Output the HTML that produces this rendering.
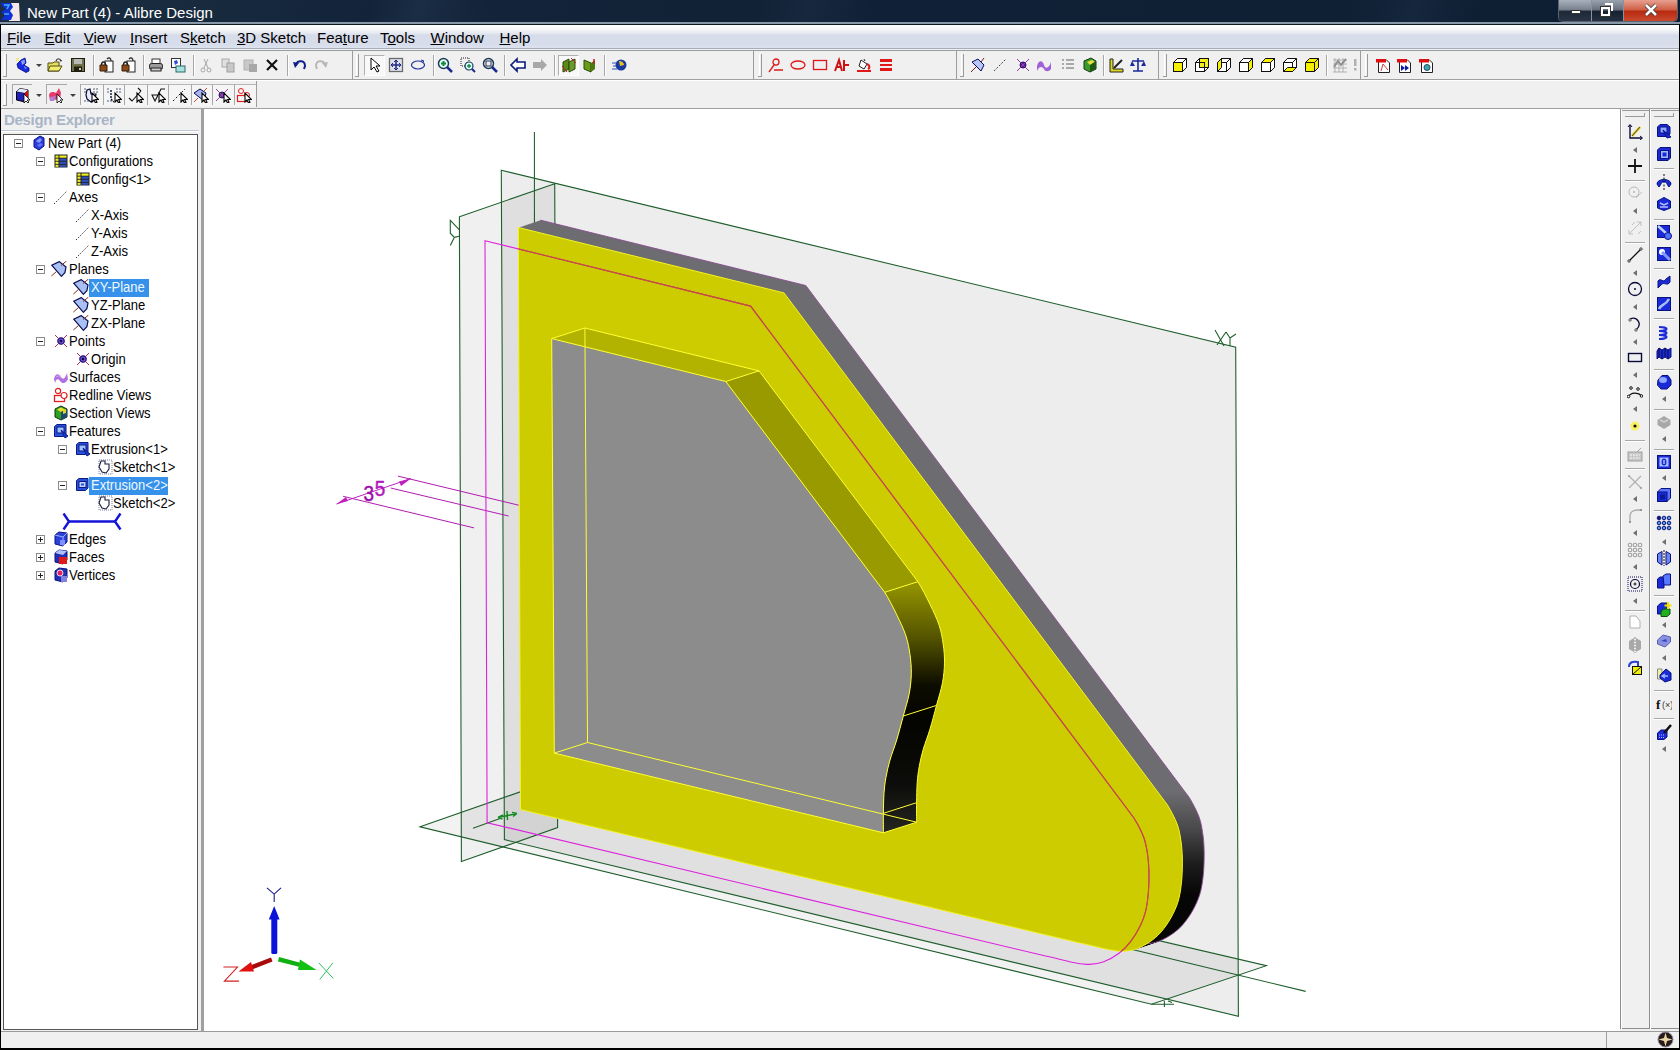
<!DOCTYPE html>
<html><head><meta charset="utf-8">
<style>
*{margin:0;padding:0;box-sizing:border-box}
html,body{width:1680px;height:1050px;overflow:hidden;background:#f0f0f0;font-family:"Liberation Sans",sans-serif;position:relative}
.abs{position:absolute}
#title{left:0;top:0;width:1680px;height:25px;background:linear-gradient(transparent 88%,#8898a8 88%,#8898a8 95%,#0e1824 95%),linear-gradient(105deg,#1c2e40 0%,#172a3e 12%,#13243a 22%,#1a2d44 25%,#132339 29%,#112136 45%,#17283e 48%,#102036 52%,#0f1f34 80%,#15273d 84%,#0e1e33 88%,#0e1d32 100%)}
#title .t{left:27px;top:4px;color:#fff;font-size:15px;white-space:nowrap}
#menu{left:1px;top:25px;width:1678px;height:26px;background:linear-gradient(#ffffff 0px,#fdfdfe 2px,#f3f5f8 5px,#e6e9f1 8px,#d7dcea 10px,#d8ddeb 20px,#dde2ef 23px,#a9adb8 23px,#a9adb8 24px,#eef0f4 24px,#eef0f4 25px,#9c9c9c 25px)}
#menu span{position:absolute;top:4px;font-size:15px;color:#000;white-space:nowrap}
#tb{left:1px;top:51px;width:1678px;height:58px;background:#f0f0f0}
#panel{left:1px;top:109px;width:200px;height:922px;background:#f0f0f0}
#split{left:201px;top:109px;width:3px;height:922px;background:#a0a0a0}
#view{left:204px;top:109px;width:1416px;height:922px;background:#fff}
#rtb{left:1620px;top:109px;width:59px;height:920px;background:#f0f0f0;border-left:1px solid #8e8e8e;border-bottom:1px solid #8e8e8e}
#status{left:1px;top:1031px;width:1678px;height:17px;background:#f0f0f0;border-top:1px solid #9a9a9a}
#tree{left:3px;top:134px;width:195px;height:896px;background:#fff;border:1px solid #555}
.row{position:absolute;height:18px;font-size:14.4px;line-height:18px;white-space:nowrap;color:#000;transform:scaleX(0.905);transform-origin:0 0}
.ex{position:absolute;width:9px;height:9px;border:1px solid #8b8b8b;background:#fff}
.ex:before{content:"";position:absolute;left:1px;top:3px;width:5px;height:1px;background:#222}
.ex.p:after{content:"";position:absolute;left:3px;top:1px;width:1px;height:5px;background:#222}
.ic{position:absolute;width:16px;height:16px}
.sel{background:#3591ea;color:#f4faff;padding:0 2px;margin-left:-2px}
</style></head><body>
<div id="title" class="abs"><div class="t abs">New Part (4) - Alibre Design</div></div>
<div id="menu" class="abs">
<span style="left:6px"><u>F</u>ile</span>
<span style="left:43.5px"><u>E</u>dit</span>
<span style="left:82.8px"><u>V</u>iew</span>
<span style="left:129px"><u>I</u>nsert</span>
<span style="left:179px">S<u>k</u>etch</span>
<span style="left:236px"><u>3</u>D Sketch</span>
<span style="left:316px">Fea<u>t</u>ure</span>
<span style="left:379px">T<u>o</u>ols</span>
<span style="left:429.5px"><u>W</u>indow</span>
<span style="left:498.5px"><u>H</u>elp</span>
</div>
<div id="tb" class="abs"></div>
<div id="panel" class="abs"></div>
<div id="split" class="abs"></div>
<div id="view" class="abs"></div>
<div id="rtb" class="abs"></div>
<div id="status" class="abs"></div>
<div id="tree" class="abs"></div>
<div class="abs" style="left:4px;top:111px;font-size:15px;font-weight:bold;color:#a9b5c6;white-space:nowrap;letter-spacing:-0.3px">Design Explorer</div>
<div class="abs" style="left:1px;top:130px;width:198px;height:1px;background:#c0c8d8"></div>
<div class="abs" style="left:1px;top:131px;width:198px;height:1px;background:#fff"></div>
<div class="ex" style="left:14px;top:139px"></div>
<svg class="abs" style="left:31.0px;top:135.0px" width="16" height="16" viewBox="0 0 16 16"><path d="M3,5 L9,1 L13,3 L13,11 L8,15 L3,12 Z" fill="#2a3ee0" stroke="#0a1280"/><path d="M5,6 L9,3 L11,5 L8,8 Z" fill="#8898ff"/><path d="M6,10 L10,8 L12,10 L8,12 Z" fill="#6070f0"/></svg>
<div class="row" style="left:47.6px;top:134px">New Part (4)</div>
<div class="ex" style="left:36px;top:157px"></div>
<svg class="abs" style="left:53.0px;top:153.0px" width="16" height="16" viewBox="0 0 16 16"><rect x="1.5" y="1.5" width="13" height="13" fill="#222"/><rect x="2.5" y="2.5" width="3" height="2.2" fill="#f0f020"/><rect x="6.5" y="2.5" width="7" height="2.2" fill="#f0f020"/><rect x="2.5" y="5.6" width="3" height="2.2" fill="#f0f020"/><rect x="6.5" y="5.6" width="7" height="2.2" fill="#3050c0"/><rect x="2.5" y="8.7" width="3" height="2.2" fill="#f0f020"/><rect x="6.5" y="8.7" width="7" height="2.2" fill="#3050c0"/><rect x="2.5" y="11.8" width="3" height="2" fill="#f0f020"/><rect x="6.5" y="11.8" width="7" height="2" fill="#3050c0"/></svg>
<div class="row" style="left:69.3px;top:152px">Configurations</div>
<svg class="abs" style="left:75.0px;top:171.0px" width="16" height="16" viewBox="0 0 16 16"><rect x="1.5" y="1.5" width="13" height="13" fill="#222"/><rect x="2.5" y="2.5" width="3" height="2.2" fill="#f0f020"/><rect x="6.5" y="2.5" width="7" height="2.2" fill="#f0f020"/><rect x="2.5" y="5.6" width="3" height="2.2" fill="#f0f020"/><rect x="6.5" y="5.6" width="7" height="2.2" fill="#3050c0"/><rect x="2.5" y="8.7" width="3" height="2.2" fill="#f0f020"/><rect x="6.5" y="8.7" width="7" height="2.2" fill="#3050c0"/><rect x="2.5" y="11.8" width="3" height="2" fill="#f0f020"/><rect x="6.5" y="11.8" width="7" height="2" fill="#3050c0"/></svg>
<div class="row" style="left:91.4px;top:170px">Config&lt;1&gt;</div>
<div class="ex" style="left:36px;top:193px"></div>
<svg class="abs" style="left:53.0px;top:189.0px" width="16" height="16" viewBox="0 0 16 16"><path d="M1,15 L14,2" stroke="#333" stroke-dasharray="1.5 1.5"/></svg>
<div class="row" style="left:69.3px;top:188px">Axes</div>
<svg class="abs" style="left:75.0px;top:207.0px" width="16" height="16" viewBox="0 0 16 16"><path d="M1,15 L14,2" stroke="#333" stroke-dasharray="1.5 1.5"/></svg>
<div class="row" style="left:91.4px;top:206px">X-Axis</div>
<svg class="abs" style="left:75.0px;top:225.0px" width="16" height="16" viewBox="0 0 16 16"><path d="M1,15 L14,2" stroke="#333" stroke-dasharray="1.5 1.5"/></svg>
<div class="row" style="left:91.4px;top:224px">Y-Axis</div>
<svg class="abs" style="left:75.0px;top:243.0px" width="16" height="16" viewBox="0 0 16 16"><path d="M1,15 L14,2" stroke="#333" stroke-dasharray="1.5 1.5"/></svg>
<div class="row" style="left:91.4px;top:242px">Z-Axis</div>
<div class="ex" style="left:36px;top:265px"></div>
<svg class="abs" style="left:51.0px;top:261.0px" width="16" height="16" viewBox="0 0 16 16"><path d="M0.7,4.2 L8.2,0.6 L15,6 L13.9,11.7 L10.4,15.3 Z" fill="#a8c0f4" stroke="#0c0c50" stroke-width="1.2"/><path d="M0.4,15 L5.4,10.6 M10,4.6 L15.5,0" stroke="#8a3020" stroke-width="1"/></svg>
<div class="row" style="left:69.3px;top:260px">Planes</div>
<svg class="abs" style="left:73.0px;top:279.0px" width="16" height="16" viewBox="0 0 16 16"><path d="M0.7,4.2 L8.2,0.6 L15,6 L13.9,11.7 L10.4,15.3 Z" fill="#a8c0f4" stroke="#0c0c50" stroke-width="1.2"/><path d="M0.4,15 L5.4,10.6 M10,4.6 L15.5,0" stroke="#8a3020" stroke-width="1"/></svg>
<div class="abs" style="left:89px;top:279px;width:60px;height:18px;background:#3591ea"></div>
<div class="row" style="left:91.4px;top:278px;color:#f0f8ff">XY-Plane</div>
<svg class="abs" style="left:73.0px;top:297.0px" width="16" height="16" viewBox="0 0 16 16"><path d="M0.7,4.2 L8.2,0.6 L15,6 L13.9,11.7 L10.4,15.3 Z" fill="#a8c0f4" stroke="#0c0c50" stroke-width="1.2"/><path d="M0.4,15 L5.4,10.6 M10,4.6 L15.5,0" stroke="#8a3020" stroke-width="1"/></svg>
<div class="row" style="left:91.4px;top:296px">YZ-Plane</div>
<svg class="abs" style="left:73.0px;top:315.0px" width="16" height="16" viewBox="0 0 16 16"><path d="M0.7,4.2 L8.2,0.6 L15,6 L13.9,11.7 L10.4,15.3 Z" fill="#a8c0f4" stroke="#0c0c50" stroke-width="1.2"/><path d="M0.4,15 L5.4,10.6 M10,4.6 L15.5,0" stroke="#8a3020" stroke-width="1"/></svg>
<div class="row" style="left:91.4px;top:314px">ZX-Plane</div>
<div class="ex" style="left:36px;top:337px"></div>
<svg class="abs" style="left:53.0px;top:333.0px" width="16" height="16" viewBox="0 0 16 16"><circle cx="8" cy="8" r="3.2" fill="#7050d8" stroke="#20107a" stroke-width="1.2"/><circle cx="8" cy="8" r="1.3" fill="#100840"/><path d="M2,2 L5.5,5.5 M10.5,10.5 L14,14 M14,2 L10.5,5.5 M5.5,10.5 L2,14" stroke="#b03060"/></svg>
<div class="row" style="left:69.3px;top:332px">Points</div>
<svg class="abs" style="left:75.0px;top:351.0px" width="16" height="16" viewBox="0 0 16 16"><circle cx="8" cy="8" r="3.2" fill="#7050d8" stroke="#20107a" stroke-width="1.2"/><circle cx="8" cy="8" r="1.3" fill="#100840"/><path d="M2,2 L5.5,5.5 M10.5,10.5 L14,14 M14,2 L10.5,5.5 M5.5,10.5 L2,14" stroke="#b03060"/></svg>
<div class="row" style="left:91.4px;top:350px">Origin</div>
<svg class="abs" style="left:53.0px;top:369.0px" width="16" height="16" viewBox="0 0 16 16"><path d="M1,10 C2,4 6,4 8,8 C10,11 12,10 14,4 L15,10 C13,15 9,15 7,12 C5,9 3,10 2,14 Z" fill="#b070e0"/><path d="M3,8 C5,6 7,7 8,9" stroke="#d8b0f0" fill="none"/></svg>
<div class="row" style="left:69.3px;top:368px">Surfaces</div>
<svg class="abs" style="left:53.0px;top:387.0px" width="16" height="16" viewBox="0 0 16 16"><circle cx="5" cy="4" r="2.6" fill="none" stroke="#e02020" stroke-width="1.2"/><rect x="1.5" y="8.5" width="10" height="6" fill="none" stroke="#e02020" stroke-width="1.3"/><circle cx="11" cy="8.5" r="3" fill="#fff" stroke="#e02020" stroke-width="1.2"/></svg>
<div class="row" style="left:69.3px;top:386px">Redline Views</div>
<svg class="abs" style="left:53.0px;top:405.0px" width="16" height="16" viewBox="0 0 16 16"><path d="M2,4 L8,1 L14,4 L14,12 L8,15 L2,12 Z" fill="#30a020" stroke="#103010"/><path d="M4,4.5 L8,2.5 L12,4.5 L8,7 Z" fill="#e8e030"/><path d="M8,7 L14,4 L14,12 L8,15 Z" fill="#1a4a70"/><path d="M10,5 L13,4 L13,8 L10,9 Z" fill="#e0d030"/></svg>
<div class="row" style="left:69.3px;top:404px">Section Views</div>
<div class="ex" style="left:36px;top:427px"></div>
<svg class="abs" style="left:53.0px;top:423.0px" width="16" height="16" viewBox="0 0 16 16"><path d="M1.5,3.5 L4,1.5 L13,1.5 L13,11 L10.5,13.5 L1.5,13.5 Z" fill="#2a50e0" stroke="#0a1a80"/><rect x="4" y="4" width="7" height="6" fill="#a0c0ff" stroke="#0a1a80"/><path d="M8,7 L15,13 L12,15 Z" fill="#1a3ad0" stroke="#0a1a80"/></svg>
<div class="row" style="left:69.3px;top:422px">Features</div>
<div class="ex" style="left:58px;top:445px"></div>
<svg class="abs" style="left:75.0px;top:441.0px" width="16" height="16" viewBox="0 0 16 16"><path d="M1.5,3.5 L4,1.5 L13,1.5 L13,11 L10.5,13.5 L1.5,13.5 Z" fill="#2a50e0" stroke="#0a1a80"/><rect x="4" y="4" width="7" height="6" fill="#a0c0ff" stroke="#0a1a80"/><path d="M8,7 L15,13 L12,15 Z" fill="#1a3ad0" stroke="#0a1a80"/></svg>
<div class="row" style="left:91.4px;top:440px">Extrusion&lt;1&gt;</div>
<svg class="abs" style="left:97.0px;top:459.0px" width="16" height="16" viewBox="0 0 16 16"><rect x="2" y="1" width="13" height="14" fill="none" stroke="#7080a0" stroke-dasharray="1 1"/><path d="M4,2 L8,2 L8,5 L12,5 L12,10 L9,14 L5,13 L2,8 Z" fill="#fff" stroke="#1a1a40" stroke-width="1.1"/></svg>
<div class="row" style="left:113.0px;top:458px">Sketch&lt;1&gt;</div>
<div class="ex" style="left:58px;top:481px"></div>
<svg class="abs" style="left:75.0px;top:477.0px" width="16" height="16" viewBox="0 0 16 16"><path d="M1.5,3.5 L4,1.5 L13,1.5 L13,11 L10.5,13.5 L1.5,13.5 Z" fill="#2a50e0" stroke="#0a1a80"/><rect x="4" y="4.5" width="7" height="6" fill="#c0d4ff" stroke="#0a1a80"/><rect x="6" y="6.5" width="3" height="2" fill="#2a50e0"/></svg>
<div class="abs" style="left:89px;top:477px;width:79px;height:18px;background:#3591ea"></div>
<div class="row" style="left:91.4px;top:476px;color:#f0f8ff">Extrusion&lt;2&gt;</div>
<svg class="abs" style="left:97.0px;top:495.0px" width="16" height="16" viewBox="0 0 16 16"><rect x="2" y="1" width="13" height="14" fill="none" stroke="#7080a0" stroke-dasharray="1 1"/><path d="M4,2 L8,2 L8,5 L12,5 L12,10 L9,14 L5,13 L2,8 Z" fill="#fff" stroke="#1a1a40" stroke-width="1.1"/></svg>
<div class="row" style="left:113.0px;top:494px">Sketch&lt;2&gt;</div>
<svg class="abs" style="left:62.0px;top:512.0px" width="61" height="19" viewBox="0 0 61 19"><path d="M6,9.5 L54,9.5" stroke="#1414d8" stroke-width="2.6"/><path d="M1.5,1.5 L7,9.5 L1.5,17.5 M58.5,1.5 L53,9.5 L58.5,17.5" fill="none" stroke="#1414d8" stroke-width="2.4"/></svg>
<div class="ex p" style="left:36px;top:535px"></div>
<svg class="abs" style="left:53.0px;top:531.0px" width="16" height="16" viewBox="0 0 16 16"><path d="M2,4 L6,1 L14,2 L14,11 L10,15 L2,13 Z" fill="#2a40d8" stroke="#0a1480"/><path d="M2,4 L10,6 L14,2 M10,6 L10,15" stroke="#a0b0ff" fill="none"/><rect x="7" y="9" width="5" height="5" fill="#8090ff"/></svg>
<div class="row" style="left:69.3px;top:530px">Edges</div>
<div class="ex p" style="left:36px;top:553px"></div>
<svg class="abs" style="left:53.0px;top:549.0px" width="16" height="16" viewBox="0 0 16 16"><path d="M2,4 L6,1 L14,2 L14,11 L10,15 L2,13 Z" fill="#2030b0" stroke="#0a1480"/><path d="M2,4 L6,1 L14,2 L10,6 Z" fill="#b0c0ff"/><rect x="6" y="8" width="8" height="7" fill="#e01818"/></svg>
<div class="row" style="left:69.3px;top:548px">Faces</div>
<div class="ex p" style="left:36px;top:571px"></div>
<svg class="abs" style="left:53.0px;top:567.0px" width="16" height="16" viewBox="0 0 16 16"><path d="M2,4 L6,1 L14,2 L14,11 L10,15 L2,13 Z" fill="#2030b0" stroke="#0a1480"/><circle cx="7" cy="6" r="3" fill="#e02060" stroke="#fff" stroke-width="0.8"/><rect x="8" y="9" width="6" height="6" fill="#8080e0"/></svg>
<div class="row" style="left:69.3px;top:566px">Vertices</div>
<svg class="abs" style="left:0;top:0" width="1680" height="1050" viewBox="0 0 1680 1050">
<defs>
<linearGradient id="gRound" gradientUnits="userSpaceOnUse" x1="0" y1="792" x2="0" y2="895">
<stop offset="0" stop-color="#6d6c70"/><stop offset="0.35" stop-color="#4a4a4c"/><stop offset="0.7" stop-color="#1c1c1c"/><stop offset="1" stop-color="#060606"/></linearGradient>
<linearGradient id="gWall" gradientUnits="userSpaceOnUse" x1="0" y1="588" x2="0" y2="832">
<stop offset="0" stop-color="#8f8f00"/><stop offset="0.2" stop-color="#555500"/><stop offset="0.4" stop-color="#0c0c00"/><stop offset="0.55" stop-color="#040400"/><stop offset="0.8" stop-color="#0c0c0a"/><stop offset="1" stop-color="#262620"/></linearGradient>
<clipPath id="cpView"><rect x="204" y="109" width="1416" height="920"/></clipPath>
<clipPath id="cpFace"><path d="M518.4,227.5 L784.0,292.9 L1167.5,805.0 C1170.9,810.6 1174.9,818.2 1177.1,824.0 C1179.3,829.8 1179.9,834.5 1180.8,840.0 C1181.7,845.5 1182.1,850.5 1182.3,857.0 C1182.5,863.5 1182.3,872.1 1181.8,879.0 C1181.2,885.9 1180.4,892.4 1179.0,898.1 C1177.6,903.8 1175.8,908.2 1173.3,913.3 C1170.8,918.4 1167.3,924.1 1163.8,928.6 C1160.3,933.1 1156.9,936.7 1152.4,940.0 C1148.0,943.3 1142.0,946.7 1137.1,948.6 C1132.2,950.5 1127.7,951.0 1122.9,951.2 C1118.2,951.4 1114.1,950.6 1108.6,949.6 C1103.1,948.6 1095.1,946.5 1090.0,945.3 C1084.9,944.1 1080.0,943.0 1078.0,942.6 L520.5,809.5 Z"/></clipPath>
</defs>
<g clip-path="url(#cpView)">
<g fill="#000" fill-opacity="0.075" stroke="none">
<polygon points="501.3,170.3 1235.7,347.2 1238.4,1016.4 504.4,839.6" fill-opacity="0.07"/>
<polygon points="459.4,216.8 554.7,183.7 557.6,827.6 461.4,861.5" fill-opacity="0.058"/>
<polygon points="420.1,826.8 520.1,791.9 1266.4,965.7 1151.5,1004.3" fill-opacity="0.05"/>
</g>
<g fill="none" stroke="#1f5e2c" stroke-width="1.1">
<polygon points="501.3,170.3 1235.7,347.2 1238.4,1016.4 504.4,839.6"/>
<polygon points="459.4,216.8 554.7,183.7 557.6,827.6 461.4,861.5"/>
<polygon points="420.1,826.8 520.1,791.9 1266.4,965.7 1151.5,1004.3"/>
<line x1="534.4" y1="131.9" x2="534.6" y2="805"/>
<line x1="534.4" y1="805" x2="1305.7" y2="991.4"/>
<line x1="500" y1="818.6" x2="473" y2="828.2"/>
<path d="M1215,330 L1224,346 M1217,345 L1226,332 M1226,332 L1230,338 L1236,334 M1230,338 L1230,346"/>
<path d="M459.2,229.6 L450.3,220.3 L450.3,233.2 L454.3,237.4 L459.2,236.3 M454.3,237.4 L450.3,245.6"/>
<path d="M1151.3,1004.3 L1174,1004.3 M1164.4,1001 L1164.4,1007 M1168,1001 L1172,1002.5"/>
</g>
<g fill="none" stroke="#b01cb0" stroke-width="1">
<line x1="397.9" y1="476.1" x2="518.7" y2="505.2"/>
<line x1="390.7" y1="488" x2="508.6" y2="516"/>
<line x1="343.1" y1="496.3" x2="474" y2="527.9"/>
<line x1="336.5" y1="504" x2="411" y2="478.5" stroke="#c020c0"/>
</g>
<path d="M336.5,504 L346,497 L348,501 Z M411,478.5 L401,486 L399,481.5 Z" fill="#c020c0"/>
<text x="0" y="0" font-family="Liberation Sans" font-size="22.5" fill="#9a10a8" stroke="#9a10a8" stroke-width="0.5" transform="translate(363.4 500.6) scale(0.84 1)">3</text><text x="0" y="0" font-family="Liberation Sans" font-size="22.5" fill="#b018c0" stroke="#b018c0" stroke-width="0.5" transform="translate(374.8 496.4) scale(0.84 1)">5</text>
<g id="body">
<g fill="url(#gRound)">
<path d="M540.2,220.1 L805.8,285.5 L1189.3,797.6 C1192.7,803.2 1196.7,810.8 1198.9,816.6 C1201.1,822.4 1201.7,827.1 1202.6,832.6 C1203.5,838.1 1203.9,843.1 1204.1,849.6 C1204.3,856.1 1204.1,864.8 1203.6,871.6 C1203.0,878.5 1202.2,885.0 1200.8,890.7 C1199.4,896.4 1197.6,900.8 1195.1,905.9 C1192.6,911.0 1189.1,916.8 1185.6,921.2 C1182.1,925.7 1178.7,929.3 1174.2,932.6 C1169.8,935.9 1163.8,939.3 1158.9,941.2 C1154.0,943.1 1149.5,943.6 1144.7,943.8 C1140.0,944.0 1135.9,943.2 1130.4,942.2 C1124.9,941.2 1116.9,939.1 1111.8,937.9 C1106.7,936.7 1101.8,935.6 1099.8,935.2 L542.3,802.1 Z"/>
<path d="M539.2,220.4 L804.8,285.8 L1188.3,797.9 C1191.7,803.6 1195.7,811.1 1197.9,816.9 C1200.1,822.8 1200.7,827.4 1201.6,832.9 C1202.5,838.4 1202.9,843.4 1203.1,849.9 C1203.3,856.4 1203.2,865.1 1202.6,871.9 C1202.1,878.8 1201.2,885.3 1199.8,891.0 C1198.4,896.8 1196.6,901.2 1194.1,906.2 C1191.6,911.3 1188.1,917.1 1184.6,921.5 C1181.1,926.0 1177.7,929.6 1173.2,932.9 C1168.8,936.3 1162.8,939.7 1157.9,941.5 C1153.0,943.4 1148.5,944.0 1143.7,944.1 C1139.0,944.3 1134.9,943.5 1129.4,942.5 C1123.9,941.6 1115.9,939.4 1110.8,938.2 C1105.7,937.1 1100.8,936.0 1098.8,935.5 L541.3,802.4 Z"/>
<path d="M538.2,220.8 L803.8,286.2 L1187.3,798.3 C1190.8,803.9 1194.7,811.4 1196.9,817.3 C1199.1,823.1 1199.8,827.8 1200.6,833.3 C1201.5,838.8 1202.0,843.8 1202.1,850.3 C1202.3,856.8 1202.2,865.4 1201.6,872.3 C1201.1,879.1 1200.2,885.7 1198.8,891.4 C1197.4,897.1 1195.7,901.5 1193.1,906.6 C1190.6,911.7 1187.1,917.4 1183.6,921.9 C1180.1,926.3 1176.7,929.9 1172.2,933.3 C1167.8,936.6 1161.8,940.0 1156.9,941.9 C1152.0,943.7 1147.5,944.3 1142.7,944.5 C1138.0,944.6 1133.9,943.9 1128.4,942.9 C1122.9,941.9 1114.9,939.7 1109.8,938.6 C1104.7,937.4 1099.8,936.3 1097.8,935.9 L540.3,802.8 Z"/>
<path d="M537.2,221.1 L802.8,286.5 L1186.3,798.6 C1189.8,804.2 1193.7,811.8 1195.9,817.6 C1198.1,823.4 1198.8,828.1 1199.6,833.6 C1200.5,839.1 1201.0,844.1 1201.1,850.6 C1201.3,857.1 1201.2,865.8 1200.6,872.6 C1200.1,879.5 1199.2,886.0 1197.8,891.7 C1196.4,897.4 1194.7,901.8 1192.1,906.9 C1189.6,912.0 1186.1,917.8 1182.6,922.2 C1179.1,926.7 1175.7,930.3 1171.2,933.6 C1166.8,936.9 1160.8,940.3 1155.9,942.2 C1151.0,944.1 1146.5,944.6 1141.7,944.8 C1137.0,945.0 1132.9,944.2 1127.4,943.2 C1121.9,942.2 1113.9,940.1 1108.8,938.9 C1103.7,937.7 1098.8,936.7 1096.8,936.2 L539.3,803.1 Z"/>
<path d="M536.2,221.4 L801.8,286.8 L1185.3,798.9 C1188.8,804.6 1192.7,812.1 1194.9,817.9 C1197.2,823.8 1197.8,828.4 1198.6,833.9 C1199.5,839.4 1200.0,844.4 1200.1,850.9 C1200.3,857.4 1200.2,866.1 1199.6,872.9 C1199.1,879.8 1198.3,886.3 1196.8,892.0 C1195.4,897.8 1193.7,902.2 1191.1,907.2 C1188.6,912.3 1185.1,918.1 1181.6,922.5 C1178.2,927.0 1174.7,930.6 1170.2,933.9 C1165.8,937.3 1159.9,940.7 1154.9,942.5 C1150.0,944.4 1145.5,945.0 1140.7,945.1 C1136.0,945.3 1131.9,944.5 1126.4,943.5 C1121.0,942.6 1112.9,940.4 1107.8,939.2 C1102.7,938.1 1097.8,937.0 1095.8,936.5 L538.3,803.4 Z"/>
<path d="M535.2,221.8 L800.8,287.2 L1184.3,799.3 C1187.8,804.9 1191.7,812.4 1193.9,818.3 C1196.2,824.1 1196.8,828.8 1197.6,834.3 C1198.5,839.8 1199.0,844.8 1199.1,851.3 C1199.3,857.8 1199.2,866.4 1198.6,873.3 C1198.1,880.1 1197.3,886.7 1195.8,892.4 C1194.4,898.1 1192.7,902.5 1190.1,907.6 C1187.6,912.7 1184.1,918.4 1180.6,922.9 C1177.2,927.3 1173.7,930.9 1169.2,934.3 C1164.8,937.6 1158.9,941.0 1153.9,942.9 C1149.0,944.7 1144.5,945.3 1139.7,945.5 C1135.0,945.6 1130.9,944.9 1125.4,943.9 C1120.0,942.9 1111.9,940.7 1106.8,939.6 C1101.7,938.4 1096.8,937.3 1094.8,936.9 L537.3,803.8 Z"/>
<path d="M534.3,222.1 L799.9,287.5 L1183.4,799.6 C1186.8,805.2 1190.7,812.8 1193.0,818.6 C1195.2,824.5 1195.8,829.1 1196.7,834.6 C1197.5,840.1 1198.0,845.1 1198.2,851.6 C1198.3,858.1 1198.2,866.8 1197.7,873.6 C1197.1,880.5 1196.3,887.0 1194.9,892.7 C1193.4,898.4 1191.7,902.8 1189.2,907.9 C1186.6,913.0 1183.1,918.8 1179.7,923.2 C1176.2,927.7 1172.7,931.3 1168.3,934.6 C1163.8,938.0 1157.9,941.4 1153.0,943.2 C1148.0,945.1 1143.5,945.7 1138.8,945.8 C1134.0,946.0 1129.9,945.2 1124.5,944.2 C1119.0,943.2 1111.0,941.1 1105.9,939.9 C1100.8,938.8 1095.9,937.7 1093.9,937.2 L536.4,804.1 Z"/>
<path d="M533.3,222.5 L798.9,287.9 L1182.4,800.0 C1185.8,805.6 1189.7,813.1 1192.0,819.0 C1194.2,824.8 1194.8,829.5 1195.7,835.0 C1196.5,840.5 1197.0,845.5 1197.2,852.0 C1197.3,858.5 1197.2,867.1 1196.7,874.0 C1196.1,880.8 1195.3,887.3 1193.9,893.1 C1192.4,898.8 1190.7,903.2 1188.2,908.3 C1185.6,913.3 1182.1,919.1 1178.7,923.6 C1175.2,928.0 1171.7,931.6 1167.3,935.0 C1162.8,938.3 1156.9,941.7 1152.0,943.6 C1147.0,945.4 1142.5,946.0 1137.8,946.2 C1133.0,946.3 1128.9,945.5 1123.5,944.6 C1118.0,943.6 1110.0,941.4 1104.9,940.3 C1099.8,939.1 1094.9,938.0 1092.9,937.6 L535.4,804.5 Z"/>
<path d="M532.3,222.8 L797.9,288.2 L1181.4,800.3 C1184.8,805.9 1188.8,813.5 1191.0,819.3 C1193.2,825.1 1193.8,829.8 1194.7,835.3 C1195.5,840.8 1196.0,845.8 1196.2,852.3 C1196.3,858.8 1196.2,867.4 1195.7,874.3 C1195.1,881.1 1194.3,887.7 1192.9,893.4 C1191.5,899.1 1189.7,903.5 1187.2,908.6 C1184.6,913.7 1181.2,919.4 1177.7,923.9 C1174.2,928.3 1170.7,932.0 1166.3,935.3 C1161.8,938.6 1155.9,942.0 1151.0,943.9 C1146.1,945.8 1141.5,946.3 1136.8,946.5 C1132.0,946.7 1128.0,945.9 1122.5,944.9 C1117.0,943.9 1109.0,941.8 1103.9,940.6 C1098.8,939.4 1093.9,938.3 1091.9,937.9 L534.4,804.8 Z"/>
<path d="M531.3,223.1 L796.9,288.5 L1180.4,800.6 C1183.8,806.2 1187.8,813.8 1190.0,819.6 C1192.2,825.5 1192.8,830.1 1193.7,835.6 C1194.5,841.1 1195.0,846.1 1195.2,852.6 C1195.3,859.1 1195.2,867.8 1194.7,874.6 C1194.1,881.5 1193.3,888.0 1191.9,893.7 C1190.5,899.4 1188.7,903.8 1186.2,908.9 C1183.6,914.0 1180.2,919.8 1176.7,924.2 C1173.2,928.7 1169.7,932.3 1165.3,935.6 C1160.8,939.0 1154.9,942.4 1150.0,944.2 C1145.1,946.1 1140.5,946.7 1135.8,946.8 C1131.0,947.0 1127.0,946.2 1121.5,945.2 C1116.0,944.2 1108.0,942.1 1102.9,940.9 C1097.8,939.8 1092.9,938.7 1090.9,938.2 L533.4,805.1 Z"/>
<path d="M530.3,223.5 L795.9,288.9 L1179.4,801.0 C1182.8,806.6 1186.8,814.1 1189.0,820.0 C1191.2,825.8 1191.8,830.5 1192.7,836.0 C1193.6,841.5 1194.0,846.5 1194.2,853.0 C1194.4,859.5 1194.2,868.1 1193.7,875.0 C1193.1,881.8 1192.3,888.3 1190.9,894.1 C1189.5,899.8 1187.7,904.2 1185.2,909.3 C1182.7,914.3 1179.2,920.1 1175.7,924.6 C1172.2,929.0 1168.7,932.6 1164.3,936.0 C1159.8,939.3 1153.9,942.7 1149.0,944.6 C1144.1,946.4 1139.5,947.0 1134.8,947.2 C1130.0,947.3 1126.0,946.5 1120.5,945.6 C1115.0,944.6 1107.0,942.4 1101.9,941.3 C1096.8,940.1 1091.9,939.0 1089.9,938.6 L532.4,805.5 Z"/>
<path d="M529.3,223.8 L794.9,289.2 L1178.4,801.3 C1181.8,806.9 1185.8,814.5 1188.0,820.3 C1190.2,826.1 1190.8,830.8 1191.7,836.3 C1192.6,841.8 1193.0,846.8 1193.2,853.3 C1193.4,859.8 1193.2,868.4 1192.7,875.3 C1192.2,882.1 1191.3,888.7 1189.9,894.4 C1188.5,900.1 1186.7,904.5 1184.2,909.6 C1181.7,914.7 1178.2,920.4 1174.7,924.9 C1171.2,929.4 1167.8,933.0 1163.3,936.3 C1158.9,939.6 1152.9,943.0 1148.0,944.9 C1143.1,946.8 1138.6,947.3 1133.8,947.5 C1129.1,947.7 1125.0,946.9 1119.5,945.9 C1114.0,944.9 1106.0,942.8 1100.9,941.6 C1095.8,940.4 1090.9,939.3 1088.9,938.9 L531.4,805.8 Z"/>
<path d="M528.3,224.1 L793.9,289.5 L1177.4,801.6 C1180.8,807.3 1184.8,814.8 1187.0,820.6 C1189.2,826.5 1189.8,831.1 1190.7,836.6 C1191.6,842.1 1192.0,847.1 1192.2,853.6 C1192.4,860.1 1192.3,868.8 1191.7,875.6 C1191.2,882.5 1190.3,889.0 1188.9,894.7 C1187.5,900.5 1185.7,904.9 1183.2,909.9 C1180.7,915.0 1177.2,920.8 1173.7,925.2 C1170.2,929.7 1166.8,933.3 1162.3,936.6 C1157.9,940.0 1151.9,943.4 1147.0,945.2 C1142.1,947.1 1137.6,947.7 1132.8,947.8 C1128.1,948.0 1124.0,947.2 1118.5,946.2 C1113.0,945.3 1105.0,943.1 1099.9,941.9 C1094.8,940.8 1089.9,939.7 1087.9,939.2 L530.4,806.1 Z"/>
<path d="M527.3,224.5 L792.9,289.9 L1176.4,802.0 C1179.9,807.6 1183.8,815.1 1186.0,821.0 C1188.2,826.8 1188.9,831.5 1189.7,837.0 C1190.6,842.5 1191.1,847.5 1191.2,854.0 C1191.4,860.5 1191.3,869.1 1190.7,876.0 C1190.2,882.8 1189.3,889.4 1187.9,895.1 C1186.5,900.8 1184.8,905.2 1182.2,910.3 C1179.7,915.4 1176.2,921.1 1172.7,925.6 C1169.2,930.0 1165.8,933.6 1161.3,937.0 C1156.9,940.3 1150.9,943.7 1146.0,945.6 C1141.1,947.4 1136.6,948.0 1131.8,948.2 C1127.1,948.3 1123.0,947.6 1117.5,946.6 C1112.0,945.6 1104.0,943.4 1098.9,942.3 C1093.8,941.1 1088.9,940.0 1086.9,939.6 L529.4,806.5 Z"/>
<path d="M526.3,224.8 L791.9,290.2 L1175.4,802.3 C1178.9,807.9 1182.8,815.5 1185.0,821.3 C1187.2,827.1 1187.9,831.8 1188.7,837.3 C1189.6,842.8 1190.1,847.8 1190.2,854.3 C1190.4,860.8 1190.3,869.5 1189.7,876.3 C1189.2,883.2 1188.3,889.7 1186.9,895.4 C1185.5,901.1 1183.8,905.5 1181.2,910.6 C1178.7,915.7 1175.2,921.5 1171.7,925.9 C1168.2,930.4 1164.8,934.0 1160.3,937.3 C1155.9,940.6 1149.9,944.0 1145.0,945.9 C1140.1,947.8 1135.6,948.3 1130.8,948.5 C1126.1,948.7 1122.0,947.9 1116.5,946.9 C1111.0,945.9 1103.0,943.8 1097.9,942.6 C1092.8,941.4 1087.9,940.4 1085.9,939.9 L528.4,806.8 Z"/>
<path d="M525.3,225.1 L790.9,290.5 L1174.4,802.6 C1177.9,808.3 1181.8,815.8 1184.0,821.6 C1186.3,827.5 1186.9,832.1 1187.7,837.6 C1188.6,843.1 1189.1,848.1 1189.2,854.6 C1189.4,861.1 1189.3,869.8 1188.7,876.6 C1188.2,883.5 1187.4,890.0 1185.9,895.7 C1184.5,901.5 1182.8,905.9 1180.2,910.9 C1177.7,916.0 1174.2,921.8 1170.7,926.2 C1167.3,930.7 1163.8,934.3 1159.3,937.6 C1154.9,941.0 1149.0,944.4 1144.0,946.2 C1139.1,948.1 1134.6,948.7 1129.8,948.8 C1125.1,949.0 1121.0,948.2 1115.5,947.2 C1110.1,946.3 1102.0,944.1 1096.9,942.9 C1091.8,941.8 1086.9,940.7 1084.9,940.2 L527.4,807.1 Z"/>
<path d="M524.3,225.5 L789.9,290.9 L1173.4,803.0 C1176.9,808.6 1180.8,816.1 1183.0,822.0 C1185.3,827.8 1185.9,832.5 1186.7,838.0 C1187.6,843.5 1188.1,848.5 1188.2,855.0 C1188.4,861.5 1188.3,870.1 1187.7,877.0 C1187.2,883.8 1186.4,890.4 1184.9,896.1 C1183.5,901.8 1181.8,906.2 1179.2,911.3 C1176.7,916.4 1173.2,922.1 1169.7,926.6 C1166.3,931.0 1162.8,934.6 1158.3,938.0 C1153.9,941.3 1148.0,944.7 1143.0,946.6 C1138.1,948.4 1133.6,949.0 1128.8,949.2 C1124.1,949.3 1120.0,948.6 1114.5,947.6 C1109.1,946.6 1101.0,944.4 1095.9,943.3 C1090.8,942.1 1085.9,941.0 1083.9,940.6 L526.4,807.5 Z"/>
<path d="M523.4,225.8 L789.0,291.2 L1172.5,803.3 C1175.9,808.9 1179.8,816.5 1182.1,822.3 C1184.3,828.2 1184.9,832.8 1185.8,838.3 C1186.6,843.8 1187.1,848.8 1187.3,855.3 C1187.4,861.8 1187.3,870.5 1186.8,877.3 C1186.2,884.2 1185.4,890.7 1184.0,896.4 C1182.5,902.1 1180.8,906.5 1178.3,911.6 C1175.7,916.7 1172.2,922.5 1168.8,926.9 C1165.3,931.4 1161.8,935.0 1157.4,938.3 C1152.9,941.7 1147.0,945.1 1142.1,946.9 C1137.1,948.8 1132.6,949.4 1127.9,949.5 C1123.1,949.7 1119.0,948.9 1113.6,947.9 C1108.1,946.9 1100.1,944.8 1095.0,943.6 C1089.9,942.5 1085.0,941.4 1083.0,940.9 L525.5,807.8 Z"/>
<path d="M522.4,226.2 L788.0,291.6 L1171.5,803.7 C1174.9,809.3 1178.8,816.8 1181.1,822.7 C1183.3,828.5 1183.9,833.2 1184.8,838.7 C1185.6,844.2 1186.1,849.2 1186.3,855.7 C1186.4,862.2 1186.3,870.8 1185.8,877.7 C1185.2,884.5 1184.4,891.0 1183.0,896.8 C1181.5,902.5 1179.8,906.9 1177.3,912.0 C1174.7,917.0 1171.2,922.8 1167.8,927.3 C1164.3,931.7 1160.8,935.3 1156.4,938.7 C1151.9,942.0 1146.0,945.4 1141.1,947.3 C1136.1,949.1 1131.6,949.7 1126.9,949.9 C1122.1,950.0 1118.0,949.2 1112.6,948.3 C1107.1,947.3 1099.1,945.1 1094.0,944.0 C1088.9,942.8 1084.0,941.7 1082.0,941.3 L524.5,808.2 Z"/>
<path d="M521.4,226.5 L787.0,291.9 L1170.5,804.0 C1173.9,809.6 1177.9,817.2 1180.1,823.0 C1182.3,828.8 1182.9,833.5 1183.8,839.0 C1184.6,844.5 1185.1,849.5 1185.3,856.0 C1185.4,862.5 1185.3,871.1 1184.8,878.0 C1184.2,884.8 1183.4,891.4 1182.0,897.1 C1180.6,902.8 1178.8,907.2 1176.3,912.3 C1173.7,917.4 1170.3,923.1 1166.8,927.6 C1163.3,932.0 1159.8,935.7 1155.4,939.0 C1150.9,942.3 1145.0,945.7 1140.1,947.6 C1135.2,949.5 1130.6,950.0 1125.9,950.2 C1121.1,950.4 1117.1,949.6 1111.6,948.6 C1106.1,947.6 1098.1,945.5 1093.0,944.3 C1087.9,943.1 1083.0,942.0 1081.0,941.6 L523.5,808.5 Z"/>
<path d="M520.4,226.8 L786.0,292.2 L1169.5,804.3 C1172.9,809.9 1176.9,817.5 1179.1,823.3 C1181.3,829.2 1181.9,833.8 1182.8,839.3 C1183.6,844.8 1184.1,849.8 1184.3,856.3 C1184.4,862.8 1184.3,871.5 1183.8,878.3 C1183.2,885.2 1182.4,891.7 1181.0,897.4 C1179.6,903.1 1177.8,907.5 1175.3,912.6 C1172.7,917.7 1169.3,923.5 1165.8,927.9 C1162.3,932.4 1158.8,936.0 1154.4,939.3 C1149.9,942.7 1144.0,946.1 1139.1,947.9 C1134.2,949.8 1129.6,950.4 1124.9,950.5 C1120.1,950.7 1116.1,949.9 1110.6,948.9 C1105.1,947.9 1097.1,945.8 1092.0,944.6 C1086.9,943.5 1082.0,942.4 1080.0,941.9 L522.5,808.8 Z"/>
<path d="M519.4,227.2 L785.0,292.6 L1168.5,804.7 C1171.9,810.3 1175.9,817.8 1178.1,823.7 C1180.3,829.5 1180.9,834.2 1181.8,839.7 C1182.7,845.2 1183.1,850.2 1183.3,856.7 C1183.5,863.2 1183.3,871.8 1182.8,878.7 C1182.2,885.5 1181.4,892.0 1180.0,897.8 C1178.6,903.5 1176.8,907.9 1174.3,913.0 C1171.8,918.0 1168.3,923.8 1164.8,928.3 C1161.3,932.7 1157.8,936.3 1153.4,939.7 C1148.9,943.0 1143.0,946.4 1138.1,948.3 C1133.2,950.1 1128.6,950.7 1123.9,950.9 C1119.1,951.0 1115.1,950.2 1109.6,949.3 C1104.1,948.3 1096.1,946.1 1091.0,945.0 C1085.9,943.8 1081.0,942.7 1079.0,942.3 L521.5,809.2 Z"/>
</g>
<path d="M540.2,220.1 L805.8,285.5 L1189.3,797.6 C1192.7,803.2 1196.7,810.8 1198.9,816.6 C1201.1,822.4 1201.7,827.1 1202.6,832.6 C1203.5,838.1 1203.9,843.1 1204.1,849.6 C1204.3,856.1 1204.1,864.8 1203.6,871.6 C1203.0,878.5 1202.2,885.0 1200.8,890.7 C1199.4,896.4 1197.6,900.8 1195.1,905.9 C1192.6,911.0 1189.1,916.8 1185.6,921.2 C1182.1,925.7 1178.7,929.3 1174.2,932.6 C1169.8,935.9 1163.8,939.3 1158.9,941.2 C1154.0,943.1 1149.5,943.6 1144.7,943.8 C1140.0,944.0 1135.9,943.2 1130.4,942.2 C1124.9,941.2 1116.9,939.1 1111.8,937.9 C1106.7,936.7 1101.8,935.6 1099.8,935.2" fill="none" stroke="#8a4f92" stroke-width="1" stroke-opacity="0.9"/>
<path id="frontface" d="M518.4,227.5 L784.0,292.9 L1167.5,805.0 C1170.9,810.6 1174.9,818.2 1177.1,824.0 C1179.3,829.8 1179.9,834.5 1180.8,840.0 C1181.7,845.5 1182.1,850.5 1182.3,857.0 C1182.5,863.5 1182.3,872.1 1181.8,879.0 C1181.2,885.9 1180.4,892.4 1179.0,898.1 C1177.6,903.8 1175.8,908.2 1173.3,913.3 C1170.8,918.4 1167.3,924.1 1163.8,928.6 C1160.3,933.1 1156.9,936.7 1152.4,940.0 C1148.0,943.3 1142.0,946.7 1137.1,948.6 C1132.2,950.5 1127.7,951.0 1122.9,951.2 C1118.2,951.4 1114.1,950.6 1108.6,949.6 C1103.1,948.6 1095.1,946.5 1090.0,945.3 C1084.9,944.1 1080.0,943.0 1078.0,942.6 L520.5,809.5 Z" fill="#cccc00"/>
<path d="M518.4,227.5 L784.0,292.9 L1167.5,805.0 C1170.9,810.6 1174.9,818.2 1177.1,824.0 C1179.3,829.8 1179.9,834.5 1180.8,840.0 C1181.7,845.5 1182.1,850.5 1182.3,857.0 C1182.5,863.5 1182.3,872.1 1181.8,879.0 C1181.2,885.9 1180.4,892.4 1179.0,898.1 C1177.6,903.8 1175.8,908.2 1173.3,913.3 C1170.8,918.4 1167.3,924.1 1163.8,928.6 C1160.3,933.1 1156.9,936.7 1152.4,940.0 C1148.0,943.3 1142.0,946.7 1137.1,948.6 C1132.2,950.5 1127.7,951.0 1122.9,951.2 C1118.2,951.4 1114.1,950.6 1108.6,949.6 C1103.1,948.6 1095.1,946.5 1090.0,945.3 C1084.9,944.1 1080.0,943.0 1078.0,942.6 L520.5,809.5 Z" fill="none" stroke="#f4f420" stroke-width="1"/>
</g>
<g id="boss">
<polygon points="551.7,338.6 584.9,328.0 759.0,370.9 725.8,381.5" fill="#b2b200"/>
<polygon points="725.8,381.5 759.0,370.9 917.9,581.7 884.7,592.3" fill="#999900"/>
<path d="M884.7,592.3 L917.9,581.7 C922.0,588.1 926.4,596.8 929.9,604.1 C933.5,611.4 937.0,618.7 939.2,625.4 C941.4,632.1 942.3,637.9 943.2,644.1 C944.1,650.3 944.6,656.3 944.5,662.7 C944.4,669.1 943.8,675.6 942.5,682.7 C941.2,689.8 938.6,697.6 936.5,705.4 C934.4,713.2 932.1,722.1 929.9,729.4 C927.7,736.7 925.0,743.2 923.2,749.4 C921.4,755.6 920.2,761.1 919.2,766.7 C918.2,772.2 917.6,776.7 917.2,782.7 C916.8,788.7 916.7,796.1 916.6,802.7 C916.5,809.3 916.6,818.9 916.6,822.2 L883.4,832.8 C883.4,829.5 883.3,819.9 883.4,813.3 C883.5,806.7 883.6,799.3 884.0,793.3 C884.4,787.3 885.0,782.8 886.0,777.3 C887.0,771.8 888.2,766.2 890.0,760.0 C891.8,753.8 894.5,747.3 896.7,740.0 C898.9,732.7 901.2,723.8 903.3,716.0 C905.4,708.2 908.0,700.4 909.3,693.3 C910.6,686.2 911.2,679.7 911.3,673.3 C911.4,666.9 910.9,660.9 910.0,654.7 C909.1,648.5 908.2,642.7 906.0,636.0 C903.8,629.3 900.2,622.0 896.7,614.7 C893.2,607.4 888.8,598.8 884.7,592.3 Z" fill="url(#gWall)"/>
<path d="M551.7,338.6 L725.8,381.5 L884.7,592.3 C888.8,598.8 893.2,607.4 896.7,614.7 C900.2,622.0 903.8,629.3 906.0,636.0 C908.2,642.7 909.1,648.5 910.0,654.7 C910.9,660.9 911.4,666.9 911.3,673.3 C911.2,679.7 910.6,686.2 909.3,693.3 C908.0,700.4 905.4,708.2 903.3,716.0 C901.2,723.8 898.9,732.7 896.7,740.0 C894.5,747.3 891.8,753.8 890.0,760.0 C888.2,766.2 887.0,771.8 886.0,777.3 C885.0,782.8 884.4,787.3 884.0,793.3 C883.6,799.3 883.5,806.7 883.4,813.3 C883.3,819.9 883.4,829.5 883.4,832.8 L554.3,753.1 Z" fill="#8c8c8c"/>
<g fill="none" stroke="#ffff30" stroke-width="1">
<path d="M551.7,338.6 L725.8,381.5 L884.7,592.3 C888.8,598.8 893.2,607.4 896.7,614.7 C900.2,622.0 903.8,629.3 906.0,636.0 C908.2,642.7 909.1,648.5 910.0,654.7 C910.9,660.9 911.4,666.9 911.3,673.3 C911.2,679.7 910.6,686.2 909.3,693.3 C908.0,700.4 905.4,708.2 903.3,716.0 C901.2,723.8 898.9,732.7 896.7,740.0 C894.5,747.3 891.8,753.8 890.0,760.0 C888.2,766.2 887.0,771.8 886.0,777.3 C885.0,782.8 884.4,787.3 884.0,793.3 C883.6,799.3 883.5,806.7 883.4,813.3 C883.3,819.9 883.4,829.5 883.4,832.8 L554.3,753.1 Z"/>
<path d="M584.9,328.0 L759.0,370.9 L917.9,581.7 C922.0,588.1 926.4,596.8 929.9,604.1 C933.5,611.4 937.0,618.7 939.2,625.4 C941.4,632.1 942.3,637.9 943.2,644.1 C944.1,650.3 944.6,656.3 944.5,662.7 C944.4,669.1 943.8,675.6 942.5,682.7 C941.2,689.8 938.6,697.6 936.5,705.4 C934.4,713.2 932.1,722.1 929.9,729.4 C927.7,736.7 925.0,743.2 923.2,749.4 C921.4,755.6 920.2,761.1 919.2,766.7 C918.2,772.2 917.6,776.7 917.2,782.7 C916.8,788.7 916.7,796.1 916.6,802.7 C916.5,809.3 916.6,818.9 916.6,822.2 L587.5,742.5 Z"/>
<line x1="551.7" y1="338.6" x2="584.9" y2="328.0"/>
<line x1="725.8" y1="381.5" x2="759.0" y2="370.9"/>
<line x1="884.7" y1="592.3" x2="917.9" y2="581.7"/>
<line x1="903.3" y1="716.0" x2="936.5" y2="705.4"/>
<line x1="883.4" y1="813.3" x2="916.6" y2="802.7"/>
<line x1="883.4" y1="832.8" x2="916.6" y2="822.2"/>
<line x1="554.3" y1="753.1" x2="587.5" y2="742.5"/>
</g></g>
<path d="M485.0,240.7 L750.6,306.1 L1134.1,818.2 C1137.5,823.8 1141.5,831.4 1143.7,837.2 C1145.9,843.0 1146.5,847.7 1147.4,853.2 C1148.3,858.7 1148.7,863.7 1148.9,870.2 C1149.1,876.7 1148.9,885.4 1148.4,892.2 C1147.8,899.1 1147.0,905.6 1145.6,911.3 C1144.2,917.0 1142.4,921.4 1139.9,926.5 C1137.4,931.6 1133.9,937.4 1130.4,941.8 C1126.9,946.3 1123.5,949.9 1119.0,953.2 C1114.5,956.5 1108.6,959.9 1103.7,961.8 C1098.8,963.7 1094.2,964.2 1089.5,964.4 C1084.8,964.6 1080.7,963.8 1075.2,962.8 C1069.7,961.8 1061.7,959.7 1056.6,958.5 C1051.5,957.3 1046.6,956.2 1044.6,955.8 L487.1,822.7 Z" fill="none" stroke="#dd22dd" stroke-width="1.1"/>
<path d="M485.0,240.7 L750.6,306.1 L1134.1,818.2 C1137.5,823.8 1141.5,831.4 1143.7,837.2 C1145.9,843.0 1146.5,847.7 1147.4,853.2 C1148.3,858.7 1148.7,863.7 1148.9,870.2 C1149.1,876.7 1148.9,885.4 1148.4,892.2 C1147.8,899.1 1147.0,905.6 1145.6,911.3 C1144.2,917.0 1142.4,921.4 1139.9,926.5 C1137.4,931.6 1133.9,937.4 1130.4,941.8 C1126.9,946.3 1123.5,949.9 1119.0,953.2 C1114.5,956.5 1108.6,959.9 1103.7,961.8 C1098.8,963.7 1094.2,964.2 1089.5,964.4 C1084.8,964.6 1080.7,963.8 1075.2,962.8 C1069.7,961.8 1061.7,959.7 1056.6,958.5 C1051.5,957.3 1046.6,956.2 1044.6,955.8 L487.1,822.7 Z" fill="none" stroke="#c25228" stroke-width="1.1" clip-path="url(#cpFace)"/>
<g id="triad">
<path d="M266.9,887.9 L274.2,894.1 L281,887.9 M274.2,894.1 L274.2,902" fill="none" stroke="#1a1a90" stroke-width="1.1"/>
<rect x="271.3" y="918" width="6" height="36" rx="1.5" fill="#0a14d8"/>
<path d="M274.2,906 L279.6,919.5 L268.8,919.5 Z" fill="#0a14d8"/>
<path d="M271,957.5 L249,966 L250.5,970 L272.5,961.5 Z" fill="#a80a0a"/>
<path d="M238.5,971.5 L251,962 L254,971.5 Z" fill="#e01010"/>
<path d="M279,957 L303,963.5 L302,967.5 L278,961.5 Z" fill="#10b010"/>
<path d="M316.5,970 L300,959.5 L298,970 Z" fill="#12c012"/>
<path d="M223.4,967 L237.5,967 L224.4,981.1 L239.1,981.1" fill="none" stroke="#d02020" stroke-width="1.1"/>
<path d="M318.7,962.8 L333.4,978.5 M319.8,979.5 L332.9,962.8" fill="none" stroke="#30c060" stroke-width="1"/>
</g>
<path d="M498,817.5 L517,813.5 M498,817.5 L503,815 M498,817.5 L502.5,819 M517,813.5 L512,812.5 M517,813.5 L513,816.5 M507,811 L507.5,820" fill="none" stroke="#128a22" stroke-width="1.5"/>
</g>
</svg>
<div class="abs" style="left:1.0px;top:79.0px;width:1678.0px;height:1.0px;background:#a0a0a0"></div>
<div class="abs" style="left:1.0px;top:80.0px;width:1678.0px;height:1.0px;background:#fff"></div>
<div class="abs" style="left:1.0px;top:108.0px;width:1678.0px;height:1.0px;background:#a0a0a0"></div>
<div class="abs" style="left:4.0px;top:54.0px;width:1.0px;height:23.0px;background:#fff"></div><div class="abs" style="left:6.0px;top:54.0px;width:1.0px;height:23.0px;background:#9a9a9a"></div><div class="abs" style="left:3.0px;top:76.0px;width:4.0px;height:1.0px;background:#9a9a9a"></div>
<div class="abs" style="left:352.3px;top:51.0px;width:1.0px;height:28.0px;background:#9c9c9c"></div>
<div class="abs" style="left:356.4px;top:54.0px;width:1.0px;height:23.0px;background:#fff"></div><div class="abs" style="left:358.4px;top:54.0px;width:1.0px;height:23.0px;background:#9a9a9a"></div><div class="abs" style="left:355.4px;top:76.0px;width:4.0px;height:1.0px;background:#9a9a9a"></div>
<div class="abs" style="left:752.5px;top:51.0px;width:1.0px;height:28.0px;background:#9c9c9c"></div>
<div class="abs" style="left:759.0px;top:54.0px;width:1.0px;height:23.0px;background:#fff"></div><div class="abs" style="left:761.0px;top:54.0px;width:1.0px;height:23.0px;background:#9a9a9a"></div><div class="abs" style="left:758.0px;top:76.0px;width:4.0px;height:1.0px;background:#9a9a9a"></div>
<div class="abs" style="left:956.0px;top:51.0px;width:1.0px;height:28.0px;background:#9c9c9c"></div>
<div class="abs" style="left:961.0px;top:54.0px;width:1.0px;height:23.0px;background:#fff"></div><div class="abs" style="left:963.0px;top:54.0px;width:1.0px;height:23.0px;background:#9a9a9a"></div><div class="abs" style="left:960.0px;top:76.0px;width:4.0px;height:1.0px;background:#9a9a9a"></div>
<div class="abs" style="left:1157.5px;top:51.0px;width:1.0px;height:28.0px;background:#9c9c9c"></div>
<div class="abs" style="left:1164.0px;top:54.0px;width:1.0px;height:23.0px;background:#fff"></div><div class="abs" style="left:1166.0px;top:54.0px;width:1.0px;height:23.0px;background:#9a9a9a"></div><div class="abs" style="left:1163.0px;top:76.0px;width:4.0px;height:1.0px;background:#9a9a9a"></div>
<div class="abs" style="left:1360.0px;top:51.0px;width:1.0px;height:28.0px;background:#9c9c9c"></div>
<div class="abs" style="left:1365.0px;top:54.0px;width:1.0px;height:23.0px;background:#fff"></div><div class="abs" style="left:1367.0px;top:54.0px;width:1.0px;height:23.0px;background:#9a9a9a"></div><div class="abs" style="left:1364.0px;top:76.0px;width:4.0px;height:1.0px;background:#9a9a9a"></div>
<div class="abs" style="left:92.6px;top:55.0px;width:1.0px;height:21.0px;background:#a8a8a8"></div><div class="abs" style="left:93.6px;top:55.0px;width:1.0px;height:21.0px;background:#fff"></div>
<div class="abs" style="left:142.5px;top:55.0px;width:1.0px;height:21.0px;background:#a8a8a8"></div><div class="abs" style="left:143.5px;top:55.0px;width:1.0px;height:21.0px;background:#fff"></div>
<div class="abs" style="left:192.8px;top:55.0px;width:1.0px;height:21.0px;background:#a8a8a8"></div><div class="abs" style="left:193.8px;top:55.0px;width:1.0px;height:21.0px;background:#fff"></div>
<div class="abs" style="left:286.7px;top:55.0px;width:1.0px;height:21.0px;background:#a8a8a8"></div><div class="abs" style="left:287.7px;top:55.0px;width:1.0px;height:21.0px;background:#fff"></div>
<div class="abs" style="left:432.5px;top:55.0px;width:1.0px;height:21.0px;background:#a8a8a8"></div><div class="abs" style="left:433.5px;top:55.0px;width:1.0px;height:21.0px;background:#fff"></div>
<div class="abs" style="left:503.8px;top:55.0px;width:1.0px;height:21.0px;background:#a8a8a8"></div><div class="abs" style="left:504.8px;top:55.0px;width:1.0px;height:21.0px;background:#fff"></div>
<div class="abs" style="left:554.0px;top:55.0px;width:1.0px;height:21.0px;background:#a8a8a8"></div><div class="abs" style="left:555.0px;top:55.0px;width:1.0px;height:21.0px;background:#fff"></div>
<div class="abs" style="left:604.0px;top:55.0px;width:1.0px;height:21.0px;background:#a8a8a8"></div><div class="abs" style="left:605.0px;top:55.0px;width:1.0px;height:21.0px;background:#fff"></div>
<div class="abs" style="left:1102.5px;top:55.0px;width:1.0px;height:21.0px;background:#a8a8a8"></div><div class="abs" style="left:1103.5px;top:55.0px;width:1.0px;height:21.0px;background:#fff"></div>
<div class="abs" style="left:1326.0px;top:55.0px;width:1.0px;height:21.0px;background:#a8a8a8"></div><div class="abs" style="left:1327.0px;top:55.0px;width:1.0px;height:21.0px;background:#fff"></div>
<div class="abs" style="left:364.3px;top:55.3px;width:21.0px;height:21.0px;border:1px solid #b0b0b0;border-right-color:#fff;border-bottom-color:#fff;background:#f8f8f8"></div>
<div class="abs" style="left:557.5px;top:55.3px;width:21.0px;height:21.0px;border:1px solid #b0b0b0;border-right-color:#fff;border-bottom-color:#fff;background:#f8f8f8"></div>
<svg class="abs" style="left:14.5px;top:56.6px" width="16" height="16" viewBox="0 0 16 16"><path d="M6,3 L10,1 L11,6 L9,8 L14,11 L14,14 L11,15.5 L3,11 L2,7 Z" fill="#1a2ae0" stroke="#000a80" stroke-width="0.8"/><path d="M6,4 L9.5,2.5 L10,6 L7,8 Z M9,9 L12,11 L10,12 Z" fill="#8a9aff"/><path d="M1,1 L4,4 M4,1 L1,4" stroke="#e8e040" stroke-width="1"/></svg>
<svg class="abs" style="left:31.0px;top:56.6px" width="16" height="16" viewBox="0 0 16 16"><path d="M5,7 L11,7 L8,10 Z" fill="#404040"/></svg>
<svg class="abs" style="left:47.3px;top:56.6px" width="16" height="16" viewBox="0 0 16 16"><path d="M1,6 L6,6 L7,5 L12,5 L12,14 L1,14 Z" fill="#e8e060" stroke="#504c10"/><path d="M3,9 L15,9 L12,14 L1,14 Z" fill="#f2ec70" stroke="#504c10"/><path d="M9,4 C10,1 13,1 14,4" fill="none" stroke="#333" stroke-width="1.2"/><path d="M12.5,3 L15,3 L14,5 Z" fill="#333"/></svg>
<svg class="abs" style="left:69.6px;top:56.6px" width="16" height="16" viewBox="0 0 16 16"><rect x="1.5" y="1.5" width="13" height="13" fill="#70704a" stroke="#1e1e10"/><rect x="4" y="2" width="8" height="5" fill="#b8b8b8"/><rect x="4" y="9.5" width="8" height="5" fill="#202010"/><rect x="9" y="11" width="2" height="2" fill="#d0d0b0"/></svg>
<svg class="abs" style="left:98.0px;top:56.6px" width="16" height="16" viewBox="0 0 16 16"><rect x="7" y="4" width="8" height="11" fill="#fff" stroke="#222"/><path d="M2,8 L9,8 L9,14 L2,14 Z" fill="#8b4a1a" stroke="#3a1c05"/><path d="M3.5,8 C3.5,4 7.5,4 7.5,8" fill="none" stroke="#222" stroke-width="1.3"/><path d="M9,2 C11,0 13,1 13,4" fill="none" stroke="#222" stroke-width="1.2"/></svg>
<svg class="abs" style="left:120.0px;top:56.6px" width="16" height="16" viewBox="0 0 16 16"><rect x="7" y="4" width="8" height="11" fill="#fff" stroke="#222"/><path d="M2,8 L9,8 L9,14 L2,14 Z" fill="#8b4a1a" stroke="#3a1c05"/><path d="M3.5,8 C3.5,4 7.5,4 7.5,8" fill="none" stroke="#222" stroke-width="1.3"/><path d="M9,2 C11,0 13,1 13,4" fill="none" stroke="#222" stroke-width="1.2"/></svg>
<svg class="abs" style="left:148.0px;top:56.6px" width="16" height="16" viewBox="0 0 16 16"><rect x="4" y="2" width="8" height="5" fill="#fff" stroke="#333"/><rect x="1.5" y="6.5" width="13" height="6" rx="2" fill="#9a9a9a" stroke="#222"/><rect x="3" y="11" width="10" height="3" fill="#ccc" stroke="#222"/></svg>
<svg class="abs" style="left:170.0px;top:56.6px" width="16" height="16" viewBox="0 0 16 16"><rect x="1.5" y="1.5" width="9" height="9" fill="#fff" stroke="#333"/><path d="M4,4 L7,3 L8,6 L5,8 Z" fill="#2a50d8"/><rect x="6" y="9" width="9" height="6" fill="#a8e0e0" stroke="#2a6a6a"/></svg>
<svg class="abs" style="left:198.0px;top:56.6px" width="16" height="16" viewBox="0 0 16 16"><circle cx="5" cy="13" r="2" fill="none" stroke="#a8a8a8"/><circle cx="11" cy="13" r="2" fill="none" stroke="#a8a8a8"/><path d="M6,11 L10,2 M10,11 L6,2" stroke="#a8a8a8"/></svg>
<svg class="abs" style="left:220.0px;top:56.6px" width="16" height="16" viewBox="0 0 16 16"><rect x="2" y="2" width="7" height="8" fill="#e0e0e0" stroke="#a8a8a8"/><rect x="7" y="6" width="7" height="9" fill="#c8c8c8" stroke="#a0a0a0"/></svg>
<svg class="abs" style="left:242.0px;top:56.6px" width="16" height="16" viewBox="0 0 16 16"><rect x="2" y="3" width="9" height="10" fill="#c8c8c8" stroke="#b0b0b0"/><rect x="7" y="7" width="8" height="8" fill="#a8a8a8"/></svg>
<svg class="abs" style="left:264.0px;top:56.6px" width="16" height="16" viewBox="0 0 16 16"><path d="M3,3 L13,13 M13,3 L3,13" stroke="#111" stroke-width="2.2"/></svg>
<svg class="abs" style="left:292.0px;top:56.6px" width="16" height="16" viewBox="0 0 16 16"><path d="M4,7 C6,3 13,3 13,9 L12,12" fill="none" stroke="#10208a" stroke-width="2"/><path d="M1,5 L7,6 L3,11 Z" fill="#10208a"/></svg>
<svg class="abs" style="left:313.4px;top:56.6px" width="16" height="16" viewBox="0 0 16 16"><path d="M12,7 C10,3 3,3 3,9 L4,12" fill="none" stroke="#b8b8b8" stroke-width="2"/><path d="M15,5 L9,6 L13,11 Z" fill="#b8b8b8"/></svg>
<svg class="abs" style="left:367.0px;top:56.6px" width="16" height="16" viewBox="0 0 16 16"><path d="M4,1 L4,13 L7,10 L10,15 L12,14 L9,9 L13,9 Z" fill="#fff" stroke="#000"/></svg>
<svg class="abs" style="left:388.0px;top:56.6px" width="16" height="16" viewBox="0 0 16 16"><rect x="1.5" y="1.5" width="13" height="13" fill="#e0e0ea" stroke="#6a6a6a" stroke-width="1.3"/><path d="M8,3 L8,13 M3,8 L13,8" stroke="#1c2a80" stroke-width="1.5"/><path d="M6,5 L8,3 L10,5 M6,11 L8,13 L10,11 M5,6 L3,8 L5,10 M11,6 L13,8 L11,10" fill="none" stroke="#1c2a80"/></svg>
<svg class="abs" style="left:410.0px;top:56.6px" width="16" height="16" viewBox="0 0 16 16"><ellipse cx="8" cy="8" rx="6.5" ry="4" fill="none" stroke="#2030a0" stroke-width="1.2"/><path d="M11,3 L14,4 L12,6" fill="none" stroke="#2030a0"/></svg>
<svg class="abs" style="left:437.0px;top:56.6px" width="16" height="16" viewBox="0 0 16 16"><circle cx="6.5" cy="6.5" r="5" fill="#e8fff0" stroke="#1a3a5a" stroke-width="1.5"/><path d="M6.5,4 L6.5,9 M4,6.5 L9,6.5" stroke="#0a8a3a" stroke-width="2"/><path d="M10,10 L15,15" stroke="#1a2a8a" stroke-width="2.5"/></svg>
<svg class="abs" style="left:459.5px;top:56.6px" width="16" height="16" viewBox="0 0 16 16"><rect x="1" y="1" width="8" height="8" fill="none" stroke="#222" stroke-dasharray="1 1"/><circle cx="9" cy="9" r="4" fill="#dff" stroke="#1a3a5a" stroke-width="1.2"/><path d="M9,7 L9,11 M7,9 L11,9" stroke="#0a8a3a" stroke-width="1.3"/><path d="M12,12 L15,15" stroke="#1a2a8a" stroke-width="2"/></svg>
<svg class="abs" style="left:481.5px;top:56.6px" width="16" height="16" viewBox="0 0 16 16"><circle cx="6.5" cy="6.5" r="5" fill="#e8f0ff" stroke="#1a3a5a" stroke-width="1.5"/><rect x="4" y="4" width="5" height="5" fill="none" stroke="#333"/><path d="M10,10 L15,15" stroke="#1a2a8a" stroke-width="2.5"/></svg>
<svg class="abs" style="left:510.0px;top:56.6px" width="16" height="16" viewBox="0 0 16 16"><path d="M1,8 L7,2 L7,5 L15,5 L15,11 L7,11 L7,14 Z" fill="#fff" stroke="#0c1a7a" stroke-width="1.6"/></svg>
<svg class="abs" style="left:532.0px;top:56.6px" width="16" height="16" viewBox="0 0 16 16"><path d="M15,8 L9,2 L9,5 L1,5 L1,11 L9,11 L9,14 Z" fill="#a8a8a8"/></svg>
<svg class="abs" style="left:560.8px;top:56.6px" width="16" height="16" viewBox="0 0 16 16"><path d="M2,5 L8,2 L8,12 L2,15 Z" fill="#5a8a1a" stroke="#2a4a0a"/><path d="M8,5 L14,2 L14,12 L8,15 Z" fill="#6a9a2a" stroke="#2a4a0a"/><path d="M1,9 L6,15 M10,1 L15,6" stroke="#c02020"/></svg>
<svg class="abs" style="left:582.0px;top:56.6px" width="16" height="16" viewBox="0 0 16 16"><path d="M2,3 L9,6 L9,15 L2,12 Z" fill="#6a9a1a" stroke="#2a4a0a"/><path d="M9,6 L13,3 L13,12 L9,15 Z" fill="#4a7a10"/><path d="M12,2 L12,7" stroke="#c02020" stroke-width="1.5"/></svg>
<svg class="abs" style="left:610.8px;top:56.6px" width="16" height="16" viewBox="0 0 16 16"><circle cx="10" cy="8" r="5.5" fill="#1a3aa0"/><path d="M8,4 C11,4 13,6 13,8 L9,9 Z" fill="#e8c020"/><path d="M1,6 L5,6 M2,9 L5,9 M1,12 L6,12" stroke="#3050c0"/></svg>
<svg class="abs" style="left:768.0px;top:56.6px" width="16" height="16" viewBox="0 0 16 16"><circle cx="8" cy="5" r="3" fill="none" stroke="#e01818" stroke-width="1.3"/><path d="M1,15 L6,8 M6,13 L15,13" stroke="#e01818" stroke-width="1.3"/></svg>
<svg class="abs" style="left:789.5px;top:56.6px" width="16" height="16" viewBox="0 0 16 16"><ellipse cx="8" cy="8" rx="7" ry="4" fill="none" stroke="#e01818" stroke-width="1.3"/></svg>
<svg class="abs" style="left:812.0px;top:56.6px" width="16" height="16" viewBox="0 0 16 16"><rect x="1.5" y="3.5" width="13" height="9" fill="none" stroke="#e01818" stroke-width="1.3"/></svg>
<svg class="abs" style="left:834.0px;top:56.6px" width="16" height="16" viewBox="0 0 16 16"><path d="M1,14 L5,3 L8,14 M2.5,10 L7,10 M10,3 L10,14 M10,8 L15,8" fill="none" stroke="#d01010" stroke-width="2"/></svg>
<svg class="abs" style="left:855.8px;top:56.6px" width="16" height="16" viewBox="0 0 16 16"><path d="M5,3 L11,7 L8,12 L3,9 Z" fill="#fff" stroke="#222"/><path d="M8,2 L9,4" stroke="#222"/><path d="M11,7 C14,8 14,11 12,12" fill="none" stroke="#e01818" stroke-width="2"/><rect x="1" y="13" width="14" height="2" fill="#e01818"/></svg>
<svg class="abs" style="left:878.0px;top:56.6px" width="16" height="16" viewBox="0 0 16 16"><rect x="2" y="2" width="12" height="3" fill="#e01818"/><rect x="2" y="7" width="12" height="2" fill="#e01818"/><rect x="2" y="11" width="12" height="3" fill="#e01818"/></svg>
<svg class="abs" style="left:969.5px;top:56.6px" width="16" height="16" viewBox="0 0 16 16"><path d="M2,5 L8,2 L14,8 L11,14 Z" fill="#b8c4f8" stroke="#0a0a5a"/><path d="M1,15 L6,10 M11,5 L14,1" stroke="#702020"/></svg>
<svg class="abs" style="left:992.0px;top:56.6px" width="16" height="16" viewBox="0 0 16 16"><path d="M2,14 L14,2" stroke="#444" stroke-dasharray="2 1.5"/></svg>
<svg class="abs" style="left:1014.5px;top:56.6px" width="16" height="16" viewBox="0 0 16 16"><circle cx="8" cy="8" r="3" fill="#5a2a9a" stroke="#2a0a6a"/><circle cx="8" cy="8" r="1.2" fill="#120a40"/><path d="M2,2 L14,14 M14,2 L2,14" stroke="#9a3ab0"/></svg>
<svg class="abs" style="left:1035.8px;top:56.6px" width="16" height="16" viewBox="0 0 16 16"><path d="M1,9 C3,2 7,4 8,8 C9,12 13,12 15,5 L15,12 C13,15 9,15 8,12 C6,9 3,9 1,14 Z" fill="#a060d8"/></svg>
<svg class="abs" style="left:1059.5px;top:56.6px" width="16" height="16" viewBox="0 0 16 16"><path d="M2,3 L4,3 M6,3 L14,3 M2,7 L4,7 M6,7 L14,7 M2,11 L4,11 M6,11 L14,11" stroke="#a8a8a8" stroke-width="2"/></svg>
<svg class="abs" style="left:1081.5px;top:56.6px" width="16" height="16" viewBox="0 0 16 16"><path d="M2,4 L9,1 L14,4 L14,12 L8,15 L2,12 Z" fill="#3a9a2a" stroke="#143a10"/><path d="M5,5 L10,3 L13,5 L8,8 Z" fill="#e8e040"/><path d="M8,8 L8,15 L14,12 L14,4 Z" fill="#205a14"/></svg>
<svg class="abs" style="left:1108.0px;top:56.6px" width="16" height="16" viewBox="0 0 16 16"><path d="M2,15 L2,2 L5,2 L5,12 L15,12 L15,15 Z" fill="#e0d820" stroke="#222"/><path d="M6,11 L14,3" stroke="#222" stroke-width="2"/></svg>
<svg class="abs" style="left:1130.0px;top:56.6px" width="16" height="16" viewBox="0 0 16 16"><path d="M8,1 L8,14 M3,14 L13,14 M2,4 L14,4" stroke="#1a2a9a" stroke-width="1.6"/><path d="M0,9 L2,4 L5,9 Z M11,9 L14,4 L16,9 Z" fill="#1a2a9a"/></svg>
<svg class="abs" style="left:1171.5px;top:56.6px" width="16" height="16" viewBox="0 0 16 16"><path d="M1.5,5.5 L5.5,1.5 L14.5,1.5 L14.5,10.5 L10.5,14.5 L1.5,14.5 Z" fill="#fff" stroke="#111"/><rect x="1.5" y="5.5" width="9" height="9" fill="#f4f000" stroke="#111"/><path d="M1.5,5.5 L5.5,1.5 M10.5,5.5 L14.5,1.5 M10.5,14.5 L14.5,10.5" stroke="#111"/></svg>
<svg class="abs" style="left:1194.0px;top:56.6px" width="16" height="16" viewBox="0 0 16 16"><path d="M1.5,5.5 L5.5,1.5 L14.5,1.5 L14.5,10.5 L10.5,14.5 L1.5,14.5 Z" fill="#fff" stroke="#111"/><rect x="1.5" y="5.5" width="9" height="9" fill="none" stroke="#111"/><path d="M1.5,5.5 L5.5,1.5 M10.5,5.5 L14.5,1.5 M10.5,14.5 L14.5,10.5" stroke="#111"/><rect x="5.5" y="1.5" width="9" height="9" fill="#f4f000" stroke="#111" fill-opacity="0.9"/><rect x="1.5" y="5.5" width="9" height="9" fill="none" stroke="#111"/></svg>
<svg class="abs" style="left:1215.8px;top:56.6px" width="16" height="16" viewBox="0 0 16 16"><path d="M1.5,5.5 L5.5,1.5 L14.5,1.5 L14.5,10.5 L10.5,14.5 L1.5,14.5 Z" fill="#fff" stroke="#111"/><rect x="1.5" y="5.5" width="9" height="9" fill="none" stroke="#111"/><path d="M1.5,5.5 L5.5,1.5 M10.5,5.5 L14.5,1.5 M10.5,14.5 L14.5,10.5" stroke="#111"/><path d="M1.5,14.5 L5.5,10.5 L5.5,1.5 L1.5,5.5 Z" fill="#f4f000" stroke="#111"/></svg>
<svg class="abs" style="left:1238.0px;top:56.6px" width="16" height="16" viewBox="0 0 16 16"><path d="M1.5,5.5 L5.5,1.5 L14.5,1.5 L14.5,10.5 L10.5,14.5 L1.5,14.5 Z" fill="#fff" stroke="#111"/><rect x="1.5" y="5.5" width="9" height="9" fill="none" stroke="#111"/><path d="M1.5,5.5 L5.5,1.5 M10.5,5.5 L14.5,1.5 M10.5,14.5 L14.5,10.5" stroke="#111"/><path d="M10.5,5.5 L14.5,1.5 L14.5,10.5 L10.5,14.5 Z" fill="#f4f000" stroke="#111"/></svg>
<svg class="abs" style="left:1259.7px;top:56.6px" width="16" height="16" viewBox="0 0 16 16"><path d="M1.5,5.5 L5.5,1.5 L14.5,1.5 L14.5,10.5 L10.5,14.5 L1.5,14.5 Z" fill="#fff" stroke="#111"/><rect x="1.5" y="5.5" width="9" height="9" fill="none" stroke="#111"/><path d="M1.5,5.5 L5.5,1.5 M10.5,5.5 L14.5,1.5 M10.5,14.5 L14.5,10.5" stroke="#111"/><path d="M1.5,5.5 L5.5,1.5 L14.5,1.5 L10.5,5.5 Z" fill="#f4f000" stroke="#111"/></svg>
<svg class="abs" style="left:1281.9px;top:56.6px" width="16" height="16" viewBox="0 0 16 16"><path d="M1.5,5.5 L5.5,1.5 L14.5,1.5 L14.5,10.5 L10.5,14.5 L1.5,14.5 Z" fill="#fff" stroke="#111"/><rect x="1.5" y="5.5" width="9" height="9" fill="none" stroke="#111"/><path d="M1.5,5.5 L5.5,1.5 M10.5,5.5 L14.5,1.5 M10.5,14.5 L14.5,10.5" stroke="#111"/><path d="M1.5,14.5 L5.5,10.5 L14.5,10.5 L10.5,14.5 Z" fill="#f4f000" stroke="#111"/></svg>
<svg class="abs" style="left:1303.6px;top:56.6px" width="16" height="16" viewBox="0 0 16 16"><path d="M1.5,5.5 L5.5,1.5 L14.5,1.5 L14.5,10.5 L10.5,14.5 L1.5,14.5 Z" fill="#f4f000" stroke="#111"/><path d="M1.5,5.5 L10.5,5.5 L10.5,14.5 M10.5,5.5 L14.5,1.5" stroke="#111" fill="none"/></svg>
<svg class="abs" style="left:1332.0px;top:56.6px" width="16" height="16" viewBox="0 0 16 16"><path d="M1,3 L15,3 M1,7 L15,7 M1,11 L15,11 M1,15 L15,15 M3,1 L3,15 M7,1 L7,15 M11,1 L11,15" stroke="#b0b0b0"/><path d="M2,10 L6,4 L9,8 L14,2" stroke="#909090" stroke-width="2" fill="none"/></svg>
<svg class="abs" style="left:1346.8px;top:56.6px" width="16" height="16" viewBox="0 0 16 16"><rect x="7" y="2" width="2.5" height="7" fill="#b0b0b0"/><rect x="7" y="11" width="2.5" height="2.5" fill="#b0b0b0"/></svg>
<svg class="abs" style="left:1374.5px;top:56.6px" width="16" height="16" viewBox="0 0 16 16"><path d="M3.5,2.5 L11,2.5 L14.5,6 L14.5,15.5 L3.5,15.5 Z" fill="#fff" stroke="#222"/><rect x="1" y="2" width="10" height="3.5" fill="#e01010"/><path d="M6,14 L8,7 L13,13" fill="none" stroke="#d04040"/></svg>
<svg class="abs" style="left:1396.0px;top:56.6px" width="16" height="16" viewBox="0 0 16 16"><path d="M3.5,2.5 L11,2.5 L14.5,6 L14.5,15.5 L3.5,15.5 Z" fill="#fff" stroke="#222"/><rect x="1" y="2" width="10" height="3.5" fill="#e01010"/><path d="M5,8 L9,11 L5,14 Z M9,8 L13,11 L9,14 Z" fill="#0a1aa0"/></svg>
<svg class="abs" style="left:1418.4px;top:56.6px" width="16" height="16" viewBox="0 0 16 16"><path d="M3.5,2.5 L11,2.5 L14.5,6 L14.5,15.5 L3.5,15.5 Z" fill="#fff" stroke="#222"/><rect x="1" y="2" width="10" height="3.5" fill="#e01010"/><circle cx="9" cy="10.5" r="3" fill="#40a0b0" stroke="#205060"/></svg>
<div class="abs" style="left:4.0px;top:84.0px;width:1.0px;height:22.0px;background:#fff"></div><div class="abs" style="left:6.0px;top:84.0px;width:1.0px;height:22.0px;background:#9a9a9a"></div><div class="abs" style="left:3.0px;top:105.0px;width:4.0px;height:1.0px;background:#9a9a9a"></div>
<div class="abs" style="left:256.0px;top:81.0px;width:1.0px;height:26.0px;background:#9c9c9c"></div>
<div class="abs" style="left:12.0px;top:84.0px;width:20.0px;height:1.0px;background:#a8a8a8"></div><div class="abs" style="left:12.0px;top:84.0px;width:1.0px;height:20.0px;background:#a8a8a8"></div>
<div class="abs" style="left:46.0px;top:84.0px;width:21.0px;height:1.0px;background:#a8a8a8"></div><div class="abs" style="left:46.0px;top:84.0px;width:1.0px;height:20.0px;background:#a8a8a8"></div>
<div class="abs" style="left:80.4px;top:84.0px;width:176.0px;height:22.0px;background:#f5f5f5"></div>
<div class="abs" style="left:80.4px;top:84.0px;width:176.0px;height:1.0px;background:#b8b8b8"></div>
<div class="abs" style="left:80.4px;top:84.0px;width:1.0px;height:21.0px;background:#a8a8a8"></div>
<div class="abs" style="left:102.8px;top:84.0px;width:1.0px;height:21.0px;background:#a8a8a8"></div>
<div class="abs" style="left:124.3px;top:84.0px;width:1.0px;height:21.0px;background:#a8a8a8"></div>
<div class="abs" style="left:146.8px;top:84.0px;width:1.0px;height:21.0px;background:#a8a8a8"></div>
<div class="abs" style="left:168.2px;top:84.0px;width:1.0px;height:21.0px;background:#a8a8a8"></div>
<div class="abs" style="left:190.7px;top:84.0px;width:1.0px;height:21.0px;background:#a8a8a8"></div>
<div class="abs" style="left:212.1px;top:84.0px;width:1.0px;height:21.0px;background:#a8a8a8"></div>
<div class="abs" style="left:233.6px;top:84.0px;width:1.0px;height:21.0px;background:#a8a8a8"></div>
<svg class="abs" style="left:14.5px;top:87.0px" width="16" height="16" viewBox="0 0 16 16"><path d="M1.5,4.5 L5,1.5 L13,3 L13,12 L10,15 L1.5,13 Z" fill="#2020b8" stroke="#000"/><path d="M1.5,4.5 L10,6 L13,3 M10,6 L10,15" stroke="#000" fill="none"/><path d="M5,1.5 L13,3 L10,6 L1.5,4.5 Z" fill="#e0e8ff"/><path d="M10,6 L13,3 L13,12 L10,15 Z" fill="#d01010"/><path d="M9,7 L9,16 L11,14 L13,16 L14,15 L12,13 L15,13 Z" fill="#fff" stroke="#000" stroke-width="0.8"/></svg>
<svg class="abs" style="left:31.0px;top:87.0px" width="16" height="16" viewBox="0 0 16 16"><path d="M5,7 L11,7 L8,10 Z" fill="#404040"/></svg>
<svg class="abs" style="left:48.0px;top:87.0px" width="16" height="16" viewBox="0 0 16 16"><path d="M1,8 C2,4 6,5 8,6 L11,1 L13,6 L12,12 L5,13 L2,14 Z" fill="#e83a6a"/><path d="M2,10 L8,9 L6,14 L2,14 Z" fill="#b080d0"/><path d="M9,7 L9,16 L11,14 L13,16 L14,15 L12,13 L15,13 Z" fill="#fff" stroke="#000" stroke-width="0.8"/></svg>
<svg class="abs" style="left:65.3px;top:87.0px" width="16" height="16" viewBox="0 0 16 16"><path d="M5,7 L11,7 L8,10 Z" fill="#404040"/></svg>
<svg class="abs" style="left:83.0px;top:87.0px" width="16" height="16" viewBox="0 0 16 16"><g fill="#1a2a50"><circle cx="2" cy="2" r="0.7"/><circle cx="11" cy="2" r="0.7"/><circle cx="14" cy="2" r="0.7"/><circle cx="2" cy="5" r="0.7"/><circle cx="11" cy="5" r="0.7"/><circle cx="14" cy="5" r="0.7"/><circle cx="2" cy="14" r="0.7"/><circle cx="5" cy="14" r="0.7"/></g><path d="M3,8 L4,3 L7,2 L8,7 L13,7 L12,12 L8,15 L4,12 Z" fill="#e8ecff" stroke="#0a0a30" stroke-width="1.2"/><path d="M9,6 L9,15 L11,13 L12.5,16 L14,15.3 L12.6,12.5 L15.5,12.5 Z" fill="#fff" stroke="#000" stroke-width="1.1"/></svg>
<svg class="abs" style="left:105.6px;top:87.0px" width="16" height="16" viewBox="0 0 16 16"><g fill="#1a2a50"><circle cx="2" cy="2" r="0.7"/><circle cx="11" cy="2" r="0.7"/><circle cx="14" cy="2" r="0.7"/><circle cx="2" cy="5" r="0.7"/><circle cx="11" cy="5" r="0.7"/><circle cx="14" cy="5" r="0.7"/><circle cx="2" cy="14" r="0.7"/><circle cx="5" cy="14" r="0.7"/></g><path d="M5,3 L5,12 L8,15" fill="none" stroke="#0a1030" stroke-width="1.4" stroke-dasharray="2 1"/><path d="M9,6 L9,15 L11,13 L12.5,16 L14,15.3 L12.6,12.5 L15.5,12.5 Z" fill="#fff" stroke="#000" stroke-width="1.1"/></svg>
<svg class="abs" style="left:128.0px;top:87.0px" width="16" height="16" viewBox="0 0 16 16"><path d="M1,11 L4,14 L13,4 M10,1 L13,4" fill="none" stroke="#111" stroke-width="1.1"/><path d="M9,6 L9,15 L11,13 L12.5,16 L14,15.3 L12.6,12.5 L15.5,12.5 Z" fill="#fff" stroke="#000" stroke-width="1.1"/></svg>
<svg class="abs" style="left:149.5px;top:87.0px" width="16" height="16" viewBox="0 0 16 16"><path d="M2,8 L8,8 L5,14 Z M8,8 L11,2 L15,2" fill="none" stroke="#111" stroke-width="1.1"/><path d="M9,6 L9,15 L11,13 L12.5,16 L14,15.3 L12.6,12.5 L15.5,12.5 Z" fill="#fff" stroke="#000" stroke-width="1.1"/></svg>
<svg class="abs" style="left:172.0px;top:87.0px" width="16" height="16" viewBox="0 0 16 16"><path d="M1,14 L13,2" stroke="#111" stroke-dasharray="2 2"/><path d="M9,6 L9,15 L11,13 L12.5,16 L14,15.3 L12.6,12.5 L15.5,12.5 Z" fill="#fff" stroke="#000" stroke-width="1.1"/></svg>
<svg class="abs" style="left:193.4px;top:87.0px" width="16" height="16" viewBox="0 0 16 16"><path d="M1,6 L7,2 L13,6 L11,14 Z" fill="#a8b4f0" stroke="#0a0a4a"/><path d="M1,15 L5,11 M11,4 L14,1" stroke="#d05030"/><path d="M9,6 L9,15 L11,13 L12.5,16 L14,15.3 L12.6,12.5 L15.5,12.5 Z" fill="#fff" stroke="#000" stroke-width="1.1"/></svg>
<svg class="abs" style="left:214.8px;top:87.0px" width="16" height="16" viewBox="0 0 16 16"><circle cx="7" cy="8" r="3" fill="#6030a0" stroke="#202060"/><path d="M1,2 L13,14 M13,2 L1,14" stroke="#a040a0"/><path d="M9,6 L9,15 L11,13 L12.5,16 L14,15.3 L12.6,12.5 L15.5,12.5 Z" fill="#fff" stroke="#000" stroke-width="1.1"/></svg>
<svg class="abs" style="left:236.3px;top:87.0px" width="16" height="16" viewBox="0 0 16 16"><circle cx="5" cy="4" r="2.5" fill="none" stroke="#e02020"/><rect x="1.5" y="8.5" width="10" height="6" fill="none" stroke="#e02020" stroke-width="1.2"/><circle cx="11" cy="8" r="2.5" fill="none" stroke="#e02020"/><path d="M9,6 L9,15 L11,13 L12.5,16 L14,15.3 L12.6,12.5 L15.5,12.5 Z" fill="#fff" stroke="#000" stroke-width="1.1"/></svg>
<div class="abs" style="left:1620.0px;top:110.0px;width:59.0px;height:1.0px;background:#9a9a9a"></div>
<div class="abs" style="left:1649.0px;top:109.0px;width:1.0px;height:920.0px;background:#8e8e8e"></div>
<div class="abs" style="left:1621.0px;top:109.0px;width:1.0px;height:920.0px;background:#fff"></div>
<div class="abs" style="left:1650.0px;top:109.0px;width:1.0px;height:920.0px;background:#fff"></div>
<div class="abs" style="left:1625.0px;top:116.0px;width:20.0px;height:1.0px;background:#9a9a9a"></div>
<div class="abs" style="left:1644.0px;top:113.0px;width:1.0px;height:4.0px;background:#9a9a9a"></div>
<div class="abs" style="left:1654.0px;top:116.0px;width:20.0px;height:1.0px;background:#9a9a9a"></div>
<div class="abs" style="left:1673.0px;top:113.0px;width:1.0px;height:4.0px;background:#9a9a9a"></div>
<div class="abs" style="left:1625.0px;top:180.2px;width:20.0px;height:1.0px;background:#a8a8a8"></div><div class="abs" style="left:1625.0px;top:181.2px;width:20.0px;height:1.0px;background:#fff"></div>
<div class="abs" style="left:1625.0px;top:242.4px;width:20.0px;height:1.0px;background:#a8a8a8"></div><div class="abs" style="left:1625.0px;top:243.4px;width:20.0px;height:1.0px;background:#fff"></div>
<div class="abs" style="left:1625.0px;top:440.4px;width:20.0px;height:1.0px;background:#a8a8a8"></div><div class="abs" style="left:1625.0px;top:441.4px;width:20.0px;height:1.0px;background:#fff"></div>
<div class="abs" style="left:1625.0px;top:468.4px;width:20.0px;height:1.0px;background:#a8a8a8"></div><div class="abs" style="left:1625.0px;top:469.4px;width:20.0px;height:1.0px;background:#fff"></div>
<div class="abs" style="left:1625.0px;top:610.4px;width:20.0px;height:1.0px;background:#a8a8a8"></div><div class="abs" style="left:1625.0px;top:611.4px;width:20.0px;height:1.0px;background:#fff"></div>
<div class="abs" style="left:1654.0px;top:168.3px;width:20.0px;height:1.0px;background:#a8a8a8"></div><div class="abs" style="left:1654.0px;top:169.3px;width:20.0px;height:1.0px;background:#fff"></div>
<div class="abs" style="left:1654.0px;top:218.6px;width:20.0px;height:1.0px;background:#a8a8a8"></div><div class="abs" style="left:1654.0px;top:219.6px;width:20.0px;height:1.0px;background:#fff"></div>
<div class="abs" style="left:1654.0px;top:268.0px;width:20.0px;height:1.0px;background:#a8a8a8"></div><div class="abs" style="left:1654.0px;top:269.0px;width:20.0px;height:1.0px;background:#fff"></div>
<div class="abs" style="left:1654.0px;top:318.0px;width:20.0px;height:1.0px;background:#a8a8a8"></div><div class="abs" style="left:1654.0px;top:319.0px;width:20.0px;height:1.0px;background:#fff"></div>
<div class="abs" style="left:1654.0px;top:368.8px;width:20.0px;height:1.0px;background:#a8a8a8"></div><div class="abs" style="left:1654.0px;top:369.8px;width:20.0px;height:1.0px;background:#fff"></div>
<div class="abs" style="left:1654.0px;top:408.7px;width:20.0px;height:1.0px;background:#a8a8a8"></div><div class="abs" style="left:1654.0px;top:409.7px;width:20.0px;height:1.0px;background:#fff"></div>
<div class="abs" style="left:1654.0px;top:448.5px;width:20.0px;height:1.0px;background:#a8a8a8"></div><div class="abs" style="left:1654.0px;top:449.5px;width:20.0px;height:1.0px;background:#fff"></div>
<div class="abs" style="left:1654.0px;top:509.9px;width:20.0px;height:1.0px;background:#a8a8a8"></div><div class="abs" style="left:1654.0px;top:510.9px;width:20.0px;height:1.0px;background:#fff"></div>
<div class="abs" style="left:1654.0px;top:595.0px;width:20.0px;height:1.0px;background:#a8a8a8"></div><div class="abs" style="left:1654.0px;top:596.0px;width:20.0px;height:1.0px;background:#fff"></div>
<div class="abs" style="left:1654.0px;top:690.4px;width:20.0px;height:1.0px;background:#a8a8a8"></div><div class="abs" style="left:1654.0px;top:691.4px;width:20.0px;height:1.0px;background:#fff"></div>
<div class="abs" style="left:1654.0px;top:718.0px;width:20.0px;height:1.0px;background:#a8a8a8"></div><div class="abs" style="left:1654.0px;top:719.0px;width:20.0px;height:1.0px;background:#fff"></div>
<svg class="abs" style="left:1627.2px;top:123.8px" width="16" height="16" viewBox="0 0 16 16"><path d="M3,1 L3,14 L15,14" fill="none" stroke="#0a0a3a" stroke-width="1.4"/><path d="M1,3 L3,0.5 L5,3 M13,12 L15.5,14 L13,16" fill="none" stroke="#0a0a3a"/><path d="M5,12 L13,3" stroke="#d8c020" stroke-width="2.5"/><path d="M5,12 L13,3" stroke="#3a3a10" stroke-width="0.8"/></svg>
<svg class="abs" style="left:1627.2px;top:142.0px" width="16" height="16" viewBox="0 0 16 16"><path d="M10,5 L6,8 L10,11 Z" fill="#707070"/></svg>
<svg class="abs" style="left:1627.2px;top:158.0px" width="16" height="16" viewBox="0 0 16 16"><path d="M8,1 L8,15 M1,8 L15,8" stroke="#111" stroke-width="1.8"/></svg>
<svg class="abs" style="left:1627.2px;top:184.0px" width="16" height="16" viewBox="0 0 16 16"><circle cx="7" cy="8" r="5" fill="none" stroke="#b8b8b8"/><circle cx="7" cy="8" r="1" fill="#b8b8b8"/><path d="M9,14 L15,8" stroke="#c0c0c0"/></svg>
<svg class="abs" style="left:1627.2px;top:203.3px" width="16" height="16" viewBox="0 0 16 16"><path d="M10,5 L6,8 L10,11 Z" fill="#707070"/></svg>
<svg class="abs" style="left:1627.2px;top:219.7px" width="16" height="16" viewBox="0 0 16 16"><path d="M2,14 L14,2 M2,14 L2,10 M2,14 L6,14 M14,2 L10,2 M14,2 L14,6 M5,5 L8,2 M11,14 L14,11" stroke="#c0c0c0" fill="none"/></svg>
<svg class="abs" style="left:1627.2px;top:247.2px" width="16" height="16" viewBox="0 0 16 16"><path d="M2,14 L14,2" stroke="#111" stroke-width="1.3"/><circle cx="2" cy="14" r="1.2" fill="#fff" stroke="#111" stroke-width="0.8"/><circle cx="14" cy="2" r="1.2" fill="#fff" stroke="#111" stroke-width="0.8"/></svg>
<svg class="abs" style="left:1627.2px;top:265.4px" width="16" height="16" viewBox="0 0 16 16"><path d="M10,5 L6,8 L10,11 Z" fill="#707070"/></svg>
<svg class="abs" style="left:1627.2px;top:281.0px" width="16" height="16" viewBox="0 0 16 16"><circle cx="8" cy="8" r="6.5" fill="none" stroke="#0a0a3a" stroke-width="1.3"/><circle cx="8" cy="8" r="1" fill="#0a0a3a"/></svg>
<svg class="abs" style="left:1627.2px;top:299.2px" width="16" height="16" viewBox="0 0 16 16"><path d="M10,5 L6,8 L10,11 Z" fill="#707070"/></svg>
<svg class="abs" style="left:1627.2px;top:315.5px" width="16" height="16" viewBox="0 0 16 16"><path d="M3,3 C10,0 16,8 9,14" fill="none" stroke="#0a0a3a" stroke-width="1.3"/><circle cx="3" cy="4" r="1.2" fill="#fff" stroke="#111" stroke-width="0.7"/><circle cx="9" cy="14" r="1.2" fill="#fff" stroke="#111" stroke-width="0.7"/></svg>
<svg class="abs" style="left:1627.2px;top:333.6px" width="16" height="16" viewBox="0 0 16 16"><path d="M10,5 L6,8 L10,11 Z" fill="#707070"/></svg>
<svg class="abs" style="left:1627.2px;top:349.0px" width="16" height="16" viewBox="0 0 16 16"><rect x="1.5" y="4.5" width="13" height="8" fill="none" stroke="#0a0a3a" stroke-width="1.4"/></svg>
<svg class="abs" style="left:1627.2px;top:367.0px" width="16" height="16" viewBox="0 0 16 16"><path d="M10,5 L6,8 L10,11 Z" fill="#707070"/></svg>
<svg class="abs" style="left:1627.2px;top:384.4px" width="16" height="16" viewBox="0 0 16 16"><path d="M1,13 C4,8 11,8 15,12" fill="none" stroke="#111" stroke-width="1.2"/><circle cx="4" cy="4" r="1.3" fill="none" stroke="#111"/><circle cx="11" cy="5" r="1.3" fill="none" stroke="#111"/><circle cx="1.5" cy="12.5" r="1.3" fill="#fff" stroke="#111"/><circle cx="14.5" cy="12" r="1.3" fill="#fff" stroke="#111"/></svg>
<svg class="abs" style="left:1627.2px;top:400.7px" width="16" height="16" viewBox="0 0 16 16"><path d="M10,5 L6,8 L10,11 Z" fill="#707070"/></svg>
<svg class="abs" style="left:1627.2px;top:417.9px" width="16" height="16" viewBox="0 0 16 16"><circle cx="8" cy="8" r="4.5" fill="#f8f060"/><circle cx="8" cy="8" r="1.6" fill="#111"/></svg>
<svg class="abs" style="left:1627.2px;top:446.9px" width="16" height="16" viewBox="0 0 16 16"><rect x="1" y="5" width="14" height="9" fill="#c8c8c8" stroke="#a0a0a0"/><path d="M3,8 L13,8 M3,11 L13,11" stroke="#e8e8e8" stroke-width="1.5" stroke-dasharray="2 1"/><path d="M10,5 L14,1" stroke="#a0a0a0"/></svg>
<svg class="abs" style="left:1627.2px;top:473.8px" width="16" height="16" viewBox="0 0 16 16"><path d="M2,2 L14,14 M14,2 L2,14" stroke="#b0b0b0" stroke-width="1.2"/><circle cx="2" cy="2" r="1" fill="#999"/><circle cx="14" cy="14" r="1" fill="#999"/></svg>
<svg class="abs" style="left:1627.2px;top:491.0px" width="16" height="16" viewBox="0 0 16 16"><path d="M10,5 L6,8 L10,11 Z" fill="#707070"/></svg>
<svg class="abs" style="left:1627.2px;top:508.2px" width="16" height="16" viewBox="0 0 16 16"><path d="M3,15 L3,8 C3,4 6,2 11,2 L15,2" fill="none" stroke="#a8a8a8" stroke-width="1.3"/><circle cx="3" cy="14" r="1" fill="#888"/><circle cx="14" cy="2" r="1" fill="#888"/></svg>
<svg class="abs" style="left:1627.2px;top:525.4px" width="16" height="16" viewBox="0 0 16 16"><path d="M10,5 L6,8 L10,11 Z" fill="#707070"/></svg>
<svg class="abs" style="left:1627.2px;top:541.7px" width="16" height="16" viewBox="0 0 16 16"><g fill="none" stroke="#a0a0a0" stroke-width="1.1"><circle cx="3" cy="3" r="1.8"/><circle cx="8" cy="3" r="1.8"/><circle cx="13" cy="3" r="1.8"/><circle cx="3" cy="8" r="1.8"/><circle cx="8" cy="8" r="1.8"/><circle cx="13" cy="8" r="1.8"/><circle cx="3" cy="13" r="1.8"/><circle cx="8" cy="13" r="1.8"/><circle cx="13" cy="13" r="1.8"/></g></svg>
<svg class="abs" style="left:1627.2px;top:559.0px" width="16" height="16" viewBox="0 0 16 16"><path d="M10,5 L6,8 L10,11 Z" fill="#707070"/></svg>
<svg class="abs" style="left:1627.2px;top:576.1px" width="16" height="16" viewBox="0 0 16 16"><rect x="1" y="1" width="14" height="14" fill="none" stroke="#0a0a5a" stroke-dasharray="1 1"/><circle cx="8" cy="8" r="4.5" fill="none" stroke="#0a0a3a" stroke-width="1.2"/><path d="M8,6.5 L8,9.5 M6.5,8 L9.5,8" stroke="#111"/></svg>
<svg class="abs" style="left:1627.2px;top:593.3px" width="16" height="16" viewBox="0 0 16 16"><path d="M10,5 L6,8 L10,11 Z" fill="#707070"/></svg>
<svg class="abs" style="left:1627.2px;top:614.2px" width="16" height="16" viewBox="0 0 16 16"><path d="M3,2 L9,2 L13,7 L13,14 L3,14 Z" fill="#fff" stroke="#b0b0b0"/></svg>
<svg class="abs" style="left:1627.2px;top:637.0px" width="16" height="16" viewBox="0 0 16 16"><path d="M2,4 L7,1 L7,15 L2,12 Z M14,4 L9,1 L9,15 L14,12 Z" fill="#a8a8a8"/><path d="M8,0 L8,16" stroke="#888" stroke-dasharray="2 1"/></svg>
<svg class="abs" style="left:1627.2px;top:660.0px" width="16" height="16" viewBox="0 0 16 16"><path d="M2,7 C2,2 6,1 11,2 L11,6" fill="none" stroke="#2a40d0" stroke-width="2"/><rect x="5.5" y="6.5" width="9" height="8" fill="#f0f000" stroke="#111"/><path d="M5.5,14.5 L14.5,6.5" stroke="#111"/></svg>
<svg class="abs" style="left:1656.0px;top:122.9px" width="16" height="16" viewBox="0 0 16 16"><path d="M1.5,4 L4,1.5 L11,1.5 L14,4 L14,11 L11,13.5 L1.5,13.5 Z" fill="#1a2ad8" stroke="#0a1280"/><rect x="4" y="4" width="7" height="6" fill="#90a8ff" stroke="#0a1280"/><path d="M7,7 L15,14 L11,15 Z" fill="#1a2ad8" stroke="#0a1280"/></svg>
<svg class="abs" style="left:1656.0px;top:145.7px" width="16" height="16" viewBox="0 0 16 16"><path d="M1.5,4 L4,1.5 L14.5,1.5 L14.5,12 L12,14.5 L1.5,14.5 Z" fill="#1a2ad8" stroke="#0a1280"/><rect x="4.5" y="4.5" width="8" height="8" fill="#a0b8ff" stroke="#0a1280"/><rect x="6.5" y="6.5" width="4" height="4" fill="#1a2ad8"/></svg>
<svg class="abs" style="left:1656.0px;top:174.0px" width="16" height="16" viewBox="0 0 16 16"><path d="M1,10 C1,4 15,4 15,10 L13,13 L11,10 C11,7 5,7 5,10 L3,13 Z" fill="#1a2ad8" stroke="#0a1280"/><path d="M8,0 L8,16" stroke="#111" stroke-dasharray="2 1.5"/></svg>
<svg class="abs" style="left:1656.0px;top:196.0px" width="16" height="16" viewBox="0 0 16 16"><path d="M1.5,5 L8,1.5 L14.5,5 L14.5,12 L8,14.5 L1.5,12 Z" fill="#1a2ad8" stroke="#0a1280"/><path d="M4,7 L8,9 L12,7 M4,11 L12,11" stroke="#b0c0ff" fill="none" stroke-width="1.5"/></svg>
<svg class="abs" style="left:1656.0px;top:224.3px" width="16" height="16" viewBox="0 0 16 16"><rect x="1.5" y="1.5" width="12" height="12" fill="#1a2ad8" stroke="#0a1280"/><path d="M2,2 L11,10" stroke="#c0d0ff" stroke-width="2.5"/><circle cx="12" cy="12" r="3.5" fill="#5070ff" stroke="#0a1280"/></svg>
<svg class="abs" style="left:1656.0px;top:246.3px" width="16" height="16" viewBox="0 0 16 16"><rect x="1.5" y="1.5" width="13" height="13" fill="#1a2ad8" stroke="#0a1280"/><circle cx="6" cy="6" r="3" fill="#fff"/><path d="M6,6 L14,14" stroke="#8098ff" stroke-width="3"/></svg>
<svg class="abs" style="left:1656.0px;top:273.7px" width="16" height="16" viewBox="0 0 16 16"><path d="M2,12 L2,7 C5,3 7,10 10,5 L14,2 L14,8 C11,13 8,7 5,11 L2,14 Z" fill="#1a2ad8" stroke="#0a1280"/></svg>
<svg class="abs" style="left:1656.0px;top:295.6px" width="16" height="16" viewBox="0 0 16 16"><rect x="1.5" y="1.5" width="13" height="13" fill="#1a2ad8" stroke="#0a1280"/><path d="M3,13 C5,8 9,10 13,3" stroke="#a8c0ff" stroke-width="2.5" fill="none"/></svg>
<svg class="abs" style="left:1656.0px;top:324.6px" width="16" height="16" viewBox="0 0 16 16"><path d="M3,2 C13,2 13,6 3,6 C13,6 13,10 3,10 C13,10 13,14 3,14" fill="none" stroke="#1a2ad8" stroke-width="2.2"/></svg>
<svg class="abs" style="left:1656.0px;top:345.4px" width="16" height="16" viewBox="0 0 16 16"><path d="M1,6 L3,3 L6,5 L9,3 L12,5 L15,3 L15,12 L12,14 L9,12 L6,14 L3,12 L1,14 Z" fill="#1a2ad8" stroke="#0a1280"/><path d="M3,3 L3,12 M6,5 L6,14 M9,3 L9,12 M12,5 L12,14" stroke="#0a0a40"/></svg>
<svg class="abs" style="left:1656.0px;top:373.5px" width="16" height="16" viewBox="0 0 16 16"><path d="M2,6 L6,1.5 L12,1.5 L15,6 L15,11 L11,15 L5,15 L1.5,11 Z" fill="#1a2ad8" stroke="#0a1280"/><ellipse cx="7" cy="6" rx="4" ry="3" fill="#90a8ff"/></svg>
<svg class="abs" style="left:1656.0px;top:390.7px" width="16" height="16" viewBox="0 0 16 16"><path d="M10,5 L6,8 L10,11 Z" fill="#707070"/></svg>
<svg class="abs" style="left:1656.0px;top:414.2px" width="16" height="16" viewBox="0 0 16 16"><path d="M1.5,6 L8,2 L14.5,6 L14.5,11 L8,15 L1.5,11 Z" fill="#a8a8a8"/><path d="M4,6 L8,8 L12,6" stroke="#d0d0d0" stroke-width="1.5" fill="none"/></svg>
<svg class="abs" style="left:1656.0px;top:430.6px" width="16" height="16" viewBox="0 0 16 16"><path d="M10,5 L6,8 L10,11 Z" fill="#707070"/></svg>
<svg class="abs" style="left:1656.0px;top:454.1px" width="16" height="16" viewBox="0 0 16 16"><rect x="1.5" y="1.5" width="13" height="13" fill="#1a2ad8" stroke="#0a1280"/><rect x="3.5" y="3.5" width="9" height="9" fill="#a8c0ff"/><ellipse cx="8" cy="8" rx="2.5" ry="3.5" fill="#1a2ad8"/><path d="M8,6 L8,10" stroke="#fff"/></svg>
<svg class="abs" style="left:1656.0px;top:469.5px" width="16" height="16" viewBox="0 0 16 16"><path d="M10,5 L6,8 L10,11 Z" fill="#707070"/></svg>
<svg class="abs" style="left:1656.0px;top:487.4px" width="16" height="16" viewBox="0 0 16 16"><path d="M1.5,5 L5,1.5 L14.5,1.5 L14.5,11 L11,14.5 L1.5,14.5 Z" fill="#5a78ff" stroke="#0a1280"/><rect x="1.5" y="5" width="9.5" height="9.5" fill="#1a2ad8" stroke="#0a1280"/><rect x="4" y="7.5" width="5" height="5" fill="#0a1a90"/></svg>
<svg class="abs" style="left:1656.0px;top:515.4px" width="16" height="16" viewBox="0 0 16 16"><g stroke="#0a1280" stroke-width="1"><circle cx="3" cy="3" r="1.8" fill="#1a1a60"/><circle cx="8" cy="3" r="1.8" fill="#5a9ad8"/><circle cx="13" cy="3" r="1.8" fill="#5a9ad8"/><circle cx="3" cy="8" r="1.8" fill="#5a9ad8"/><circle cx="8" cy="8" r="1.8" fill="#5a9ad8"/><circle cx="13" cy="8" r="1.8" fill="#5a9ad8"/><circle cx="3" cy="13" r="1.8" fill="#5a9ad8"/><circle cx="8" cy="13" r="1.8" fill="#5a9ad8"/><circle cx="13" cy="13" r="1.8" fill="#5a9ad8"/></g></svg>
<svg class="abs" style="left:1656.0px;top:533.6px" width="16" height="16" viewBox="0 0 16 16"><path d="M10,5 L6,8 L10,11 Z" fill="#707070"/></svg>
<svg class="abs" style="left:1656.0px;top:549.9px" width="16" height="16" viewBox="0 0 16 16"><path d="M1.5,4 L6,1.5 L6,15 L1.5,12 Z M14.5,4 L10,1.5 L10,15 L14.5,12 Z" fill="#6a84f0" stroke="#0a1280"/><path d="M8,0 L8,16" stroke="#111" stroke-dasharray="2 1"/></svg>
<svg class="abs" style="left:1656.0px;top:572.5px" width="16" height="16" viewBox="0 0 16 16"><path d="M1.5,6 L4,4 L8,4 L8,15 L1.5,15 Z" fill="#1a2ad8" stroke="#0a1280"/><path d="M7,3 L10,1 L14.5,1 L14.5,12 L8,12 Z" fill="#5a78ff" stroke="#0a1280"/></svg>
<svg class="abs" style="left:1656.0px;top:600.6px" width="16" height="16" viewBox="0 0 16 16"><path d="M1.5,5 L5,2 L11,2 L11,10 L8,13 L1.5,13 Z" fill="#1a2ad8" stroke="#0a1280"/><path d="M5,10 L8,8 L14,8 L14,13 L11,15.5 L5,15.5 Z" fill="#20b020" stroke="#0a500a"/><path d="M12,1 L12,8 M8.5,4.5 L15.5,4.5" stroke="#f0e000" stroke-width="2.2"/></svg>
<svg class="abs" style="left:1656.0px;top:616.9px" width="16" height="16" viewBox="0 0 16 16"><path d="M10,5 L6,8 L10,11 Z" fill="#707070"/></svg>
<svg class="abs" style="left:1656.0px;top:632.3px" width="16" height="16" viewBox="0 0 16 16"><path d="M1.5,8 L7,3 L14.5,5 L14.5,10 L9,15 L1.5,12 Z" fill="#8a90e0" stroke="#5a60b0"/><path d="M5,9 L10,7 L11,10 Z" fill="#3040c0"/></svg>
<svg class="abs" style="left:1656.0px;top:650.4px" width="16" height="16" viewBox="0 0 16 16"><path d="M10,5 L6,8 L10,11 Z" fill="#707070"/></svg>
<svg class="abs" style="left:1656.0px;top:667.3px" width="16" height="16" viewBox="0 0 16 16"><path d="M1.5,2 L6,2 L6,12 L1.5,12 Z" fill="#f0f0a0" stroke="#888"/><path d="M4,8 L10,2 L15,6 L15,13 L9,15 L4,11 Z" fill="#1a2ad8" stroke="#0a1280"/><path d="M6,9 L12,9 M9,7 L6,9 L9,11" stroke="#a0b8ff" fill="none" stroke-width="1.3"/></svg>
<svg class="abs" style="left:1656.0px;top:696.0px" width="16" height="16" viewBox="0 0 16 16"><text x="0" y="13" font-family="Liberation Serif" font-weight="bold" font-size="13" fill="#111">f</text><text x="6" y="12" font-family="Liberation Sans" font-size="9" fill="#333">(×)</text></svg>
<svg class="abs" style="left:1656.0px;top:724.0px" width="16" height="16" viewBox="0 0 16 16"><path d="M1.5,9 L5,6 L11,6 L11,13 L8,15.5 L1.5,15.5 Z" fill="#1a2ad8" stroke="#0a1280"/><path d="M3,11 L9,11 M3,13.5 L9,13.5" stroke="#a0b8ff" stroke-dasharray="1 1"/><path d="M8,9 L15,1" stroke="#111" stroke-width="2.5"/></svg>
<svg class="abs" style="left:1656.0px;top:741.3px" width="16" height="16" viewBox="0 0 16 16"><path d="M10,5 L6,8 L10,11 Z" fill="#707070"/></svg>
<div class="abs" style="left:1606px;top:1032px;width:1px;height:16px;background:#a0a0a0"></div>
<svg class="abs" style="left:1657px;top:1031px" width="17" height="17" viewBox="0 0 17 17"><circle cx="8.5" cy="8.5" r="7.5" fill="#2a1a1a" stroke="#8a8aa0"/><path d="M8.5,1.5 L10,7 L15.5,8.5 L10,10 L8.5,15.5 L7,10 L1.5,8.5 L7,7 Z" fill="#e8d8a8"/></svg>
<svg class="abs" style="left:0;top:1px" width="22" height="22" viewBox="0 0 22 22"><path d="M9,2 L19,2 L20,20 L9,20 Z" fill="#f4e8e8"/><path d="M1,2 L11,2 L13,6 L10,10 L13,14 L11,19 L1,19 L5,14 L1,11 L6,8 L2,5 Z" fill="#1030d8"/><path d="M4,4 L9,4 L7,8 M4,13 L9,13" stroke="#40b0f0" stroke-width="1.5" fill="none"/></svg>
<div class="abs" style="left:1558px;top:0;width:120px;height:22px;border:1px solid #5a6270;border-top:none;border-radius:0 0 5px 5px;overflow:hidden">
<div class="abs" style="left:0;top:0;width:32px;height:21px;background:linear-gradient(#a8b0bc 0%,#7a8290 45%,#1c2838 55%,#2a3444 100%)"></div>
<div class="abs" style="left:32px;top:0;width:1px;height:21px;background:#8a929c"></div>
<div class="abs" style="left:33px;top:0;width:31px;height:21px;background:linear-gradient(#9aa2ae 0%,#6a7280 45%,#162232 55%,#243040 100%)"></div>
<div class="abs" style="left:64px;top:0;width:1px;height:21px;background:#8a929c"></div>
<div class="abs" style="left:65px;top:0;width:55px;height:21px;background:linear-gradient(#e8a090 0%,#d06048 45%,#b82a10 55%,#c84a30 100%)"></div>
<div class="abs" style="left:12px;top:10px;width:10px;height:4px;background:#fff;border:1px solid #333"></div>
<div class="abs" style="left:42px;top:7px;width:9px;height:9px;border:2px solid #fff;outline:1px solid #333"></div>
<div class="abs" style="left:46px;top:3px;width:8px;height:8px;border-top:2px solid #fff;border-right:2px solid #fff"></div>
<svg class="abs" style="left:84px;top:3px" width="16" height="14" viewBox="0 0 16 14"><path d="M3,2 L13,12 M13,2 L3,12" stroke="#333" stroke-width="4"/><path d="M3,2 L13,12 M13,2 L3,12" stroke="#fff" stroke-width="2.6"/></svg>
</div>

<div id="frameL" class="abs" style="left:0;top:24px;width:1px;height:1026px;background:#000"></div>
<div class="abs" style="left:1679px;top:24px;width:1px;height:1026px;background:#000"></div>
<div class="abs" style="left:0;top:1048px;width:1680px;height:2px;background:#000"></div>
</body></html>
